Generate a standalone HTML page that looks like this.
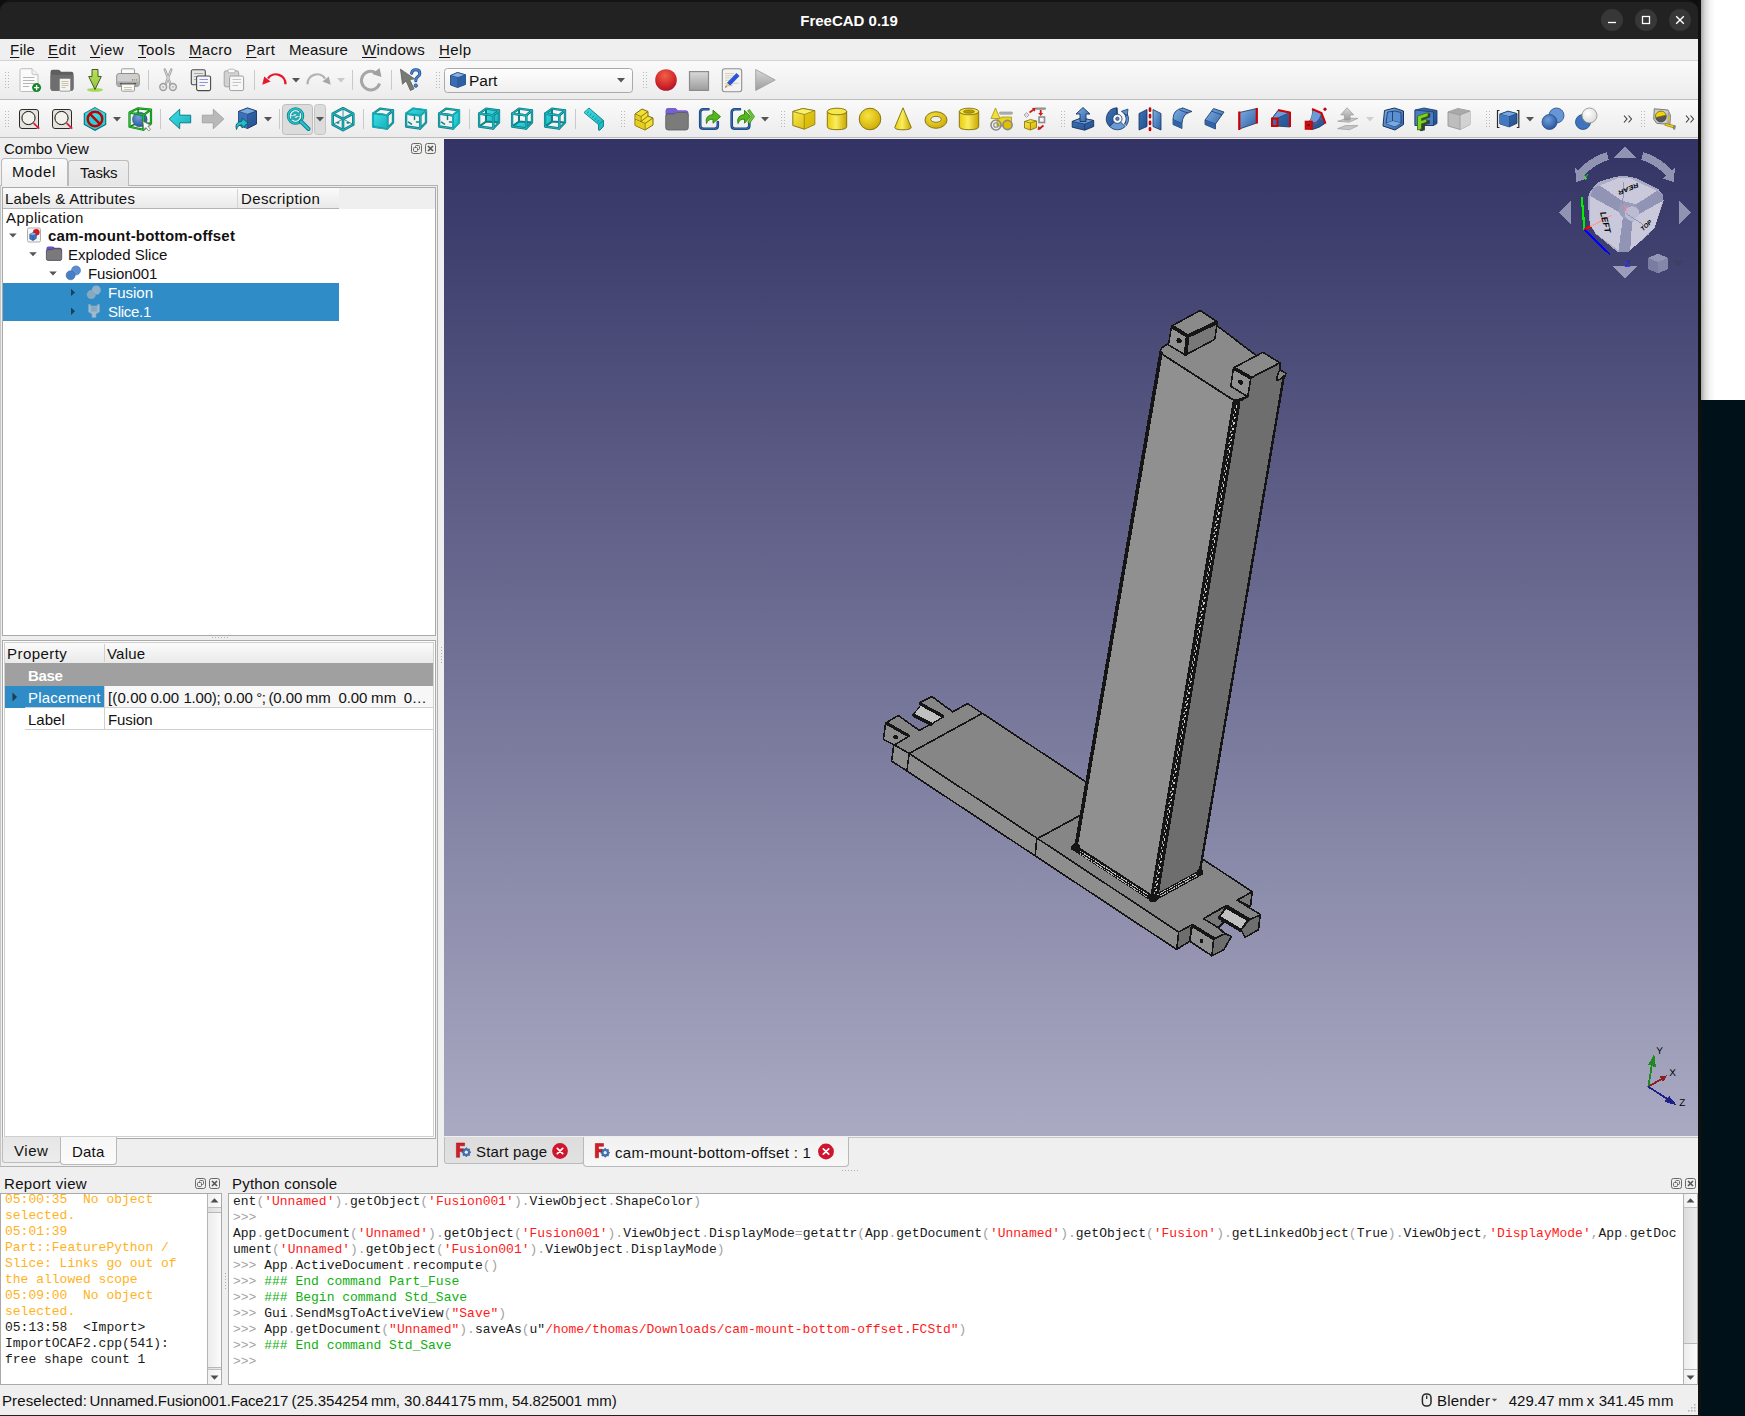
<!DOCTYPE html>
<html lang="en"><head><meta charset="utf-8"><title>FreeCAD 0.19</title>
<style>
*{box-sizing:border-box;margin:0;padding:0}
html,body{width:1745px;height:1416px;overflow:hidden;background:#fff}
body{position:relative;font-family:"Liberation Sans","DejaVu Sans",sans-serif;font-size:15px;color:#111;line-height:1}
.a{position:absolute}
.t{position:absolute;white-space:pre;line-height:18px;height:18px}
.mono{font-family:"Liberation Mono","DejaVu Sans Mono",monospace;font-size:13px;line-height:16px;white-space:pre;position:absolute}
u{text-decoration:underline;text-underline-offset:2px;text-decoration-thickness:1px}
#desk{left:1701px;top:400px;width:44px;height:1016px;background:#00111a}
#shadow{left:1701px;top:0;width:20px;height:400px;background:linear-gradient(90deg,#a8a8a8 0,#d8d8d8 4px,#f4f4f4 9px,#fff 14px)}
#win{left:0;top:0;width:1701px;height:1416px;background:#efefef;border-right:3px solid #11110f;border-bottom:1px solid #222;overflow:hidden}
#title{left:0;top:0;width:1698px;height:39px;background:#222222;border-top:2px solid #141414;border-radius:10px 10px 0 0}
#title .cap{left:0;width:1698px;top:10px;text-align:center;color:#fff;font-weight:bold;font-size:15px;line-height:18px;letter-spacing:0}
.wb{width:22px;height:22px;border-radius:11px;background:#373737;top:7px}
#menubar{left:0;top:39px;width:1698px;height:22px;background:#efefef;border-bottom:1px solid #d4d4d4}
.tb{left:0;width:1698px;height:38px;background:linear-gradient(#fafafa,#ececec);border-bottom:1px solid #bdbdbd}
.hdr{background:linear-gradient(#fbfbfb,#e9e9e9)}
.sel{background:#308cc6;color:#fff}
.grip{width:5px;height:18px;background-image:radial-gradient(circle,#b5b5b5 0.7px,transparent 1px);background-size:3px 3px}
.sep{width:1px;height:20px;background:#c8c8c8}
.ic{position:absolute;width:24px;height:24px;overflow:visible}
.arr{position:absolute;width:0;height:0;border-left:3.5px solid transparent;border-right:3.5px solid transparent;border-top:4px solid #555}
.dockb{position:absolute;width:11px;height:11px;border:1px solid #6a6865;border-radius:2.5px}
</style></head><body>
<div id="shadow" class="a"></div><div id="desk" class="a"></div>
<div id="win" class="a">
<div class="a" style="left:0;top:0;width:1698px;height:14px;background:#0e0e0e"></div>
<!-- title bar -->
<div id="title" class="a"><div class="a cap">FreeCAD 0.19</div>
<div class="a wb" style="left:1601px"><svg class="a" style="left:0;top:0" width="22" height="22"><path d="M7 13.5h8" stroke="#fff" stroke-width="1.3" fill="none"/></svg></div>
<div class="a wb" style="left:1635px"><svg class="a" style="left:0;top:0" width="22" height="22"><rect x="7.5" y="7.5" width="7" height="7" stroke="#fff" stroke-width="1.3" fill="none"/></svg></div>
<div class="a wb" style="left:1669px"><svg class="a" style="left:0;top:0" width="22" height="22"><path d="M7.2 7.2l7.6 7.6M14.8 7.2l-7.6 7.6" stroke="#fff" stroke-width="1.4" fill="none"/></svg></div>
</div>
<!-- menu bar -->
<div id="menubar" class="a">
<span class="t" style="left:10px;top:2px;letter-spacing:0.2px"><u>F</u>ile</span>
<span class="t" style="left:48px;top:2px;letter-spacing:0.6px"><u>E</u>dit</span>
<span class="t" style="left:90px;top:2px;letter-spacing:0.45px"><u>V</u>iew</span>
<span class="t" style="left:138px;top:2px;letter-spacing:0.5px"><u>T</u>ools</span>
<span class="t" style="left:189px;top:2px;letter-spacing:0.3px"><u>M</u>acro</span>
<span class="t" style="left:246px;top:2px;letter-spacing:0.45px"><u>P</u>art</span>
<span class="t" style="left:289px;top:2px;letter-spacing:0.08px">Measure</span>
<span class="t" style="left:362px;top:2px;letter-spacing:0.3px"><u>W</u>indows</span>
<span class="t" style="left:439px;top:2px;letter-spacing:0.4px"><u>H</u>elp</span>
</div>
<div class="a tb" id="tb1" style="top:61px;height:39px"></div>
<div class="a tb" id="tb2" style="top:100px;height:38px"></div>
<!-- toolbar icons -->
<svg class="a" style="left:0;top:0" width="1698" height="140" viewBox="0 0 1698 140">
<defs>
<linearGradient id="gB" x1="0" y1="0" x2="1" y2="1"><stop offset="0" stop-color="#7fb0e6"/><stop offset="1" stop-color="#2c5fa5"/></linearGradient>
<linearGradient id="gBd" x1="0" y1="0" x2="1" y2="1"><stop offset="0" stop-color="#3f73b8"/><stop offset="1" stop-color="#234f8e"/></linearGradient>
<linearGradient id="gY" x1="0" y1="0" x2="1" y2="1"><stop offset="0" stop-color="#fbed55"/><stop offset="1" stop-color="#d4b200"/></linearGradient>
<linearGradient id="gYh" x1="0" y1="0" x2="1" y2="0"><stop offset="0" stop-color="#e6cc10"/><stop offset=".45" stop-color="#fbee5c"/><stop offset="1" stop-color="#c8a600"/></linearGradient>
<linearGradient id="gC" x1="0" y1="0" x2="1" y2="1"><stop offset="0" stop-color="#3fe0e8"/><stop offset="1" stop-color="#17b0ba"/></linearGradient>
<linearGradient id="gG" x1="0" y1="0" x2="0" y2="1"><stop offset="0" stop-color="#d9d9d9"/><stop offset="1" stop-color="#9c9c9c"/></linearGradient>
<linearGradient id="gGr" x1="0" y1="0" x2="0" y2="1"><stop offset="0" stop-color="#b9e35a"/><stop offset="1" stop-color="#8dc63f"/></linearGradient>
<radialGradient id="gR" cx=".45" cy=".3" r=".75"><stop offset="0" stop-color="#f0604a"/><stop offset=".6" stop-color="#d42a2a"/><stop offset="1" stop-color="#a4102c"/></radialGradient>
<radialGradient id="gBs" cx=".4" cy=".35" r=".7"><stop offset="0" stop-color="#6f9fdb"/><stop offset="1" stop-color="#24549a"/></radialGradient>
<radialGradient id="gYs" cx=".4" cy=".35" r=".75"><stop offset="0" stop-color="#f8e540"/><stop offset="1" stop-color="#c9a400"/></radialGradient>
<radialGradient id="gW" cx=".4" cy=".35" r=".75"><stop offset="0" stop-color="#ffffff"/><stop offset="1" stop-color="#d6d6d2"/></radialGradient>
<linearGradient id="gCombo" x1="0" y1="0" x2="0" y2="1"><stop offset="0" stop-color="#fefefe"/><stop offset="1" stop-color="#efefef"/></linearGradient></defs>
<rect x="5" y="72" width="1" height="1" fill="#b9b9b9"/><rect x="8" y="72" width="1" height="1" fill="#b9b9b9"/><rect x="5" y="75" width="1" height="1" fill="#b9b9b9"/><rect x="8" y="75" width="1" height="1" fill="#b9b9b9"/><rect x="5" y="78" width="1" height="1" fill="#b9b9b9"/><rect x="8" y="78" width="1" height="1" fill="#b9b9b9"/><rect x="5" y="81" width="1" height="1" fill="#b9b9b9"/><rect x="8" y="81" width="1" height="1" fill="#b9b9b9"/><rect x="5" y="84" width="1" height="1" fill="#b9b9b9"/><rect x="8" y="84" width="1" height="1" fill="#b9b9b9"/><rect x="5" y="87" width="1" height="1" fill="#b9b9b9"/><rect x="8" y="87" width="1" height="1" fill="#b9b9b9"/>
<g transform="translate(18,68)"><path d="M3.5 0.7h10.5l6 6v15.3q0 1.5-1.5 1.5h-15q-1.5 0-1.5-1.5v-19.8q0-1.5 1.5-1.5z" fill="#fbfbfb" stroke="#bdbdbd"/><path d="M14 0.7v4.5q0 1.5 1.5 1.5h4.5" fill="#f0f0f0" stroke="#c6c6c6"/><path d="M5 9.5h11.5M5 12.5h11.5M5 15.5h11.5M5 18.5h6" stroke="#b4b4b4" stroke-width="1"/><circle cx="18.6" cy="19.6" r="4.5" fill="#14862a"/><path d="M16 19.6h5.2M18.6 17v5.2" stroke="#fff" stroke-width="1.3"/></g>
<g transform="translate(50,68)"><path d="M0.5 4q0-2.3 2.3-2.3h5.2q1.5 0 2.2 1l0.8 1.1h10.2q2.3 0 2.3 2.3v14.4q0 2.3-2.3 2.3h-18.4q-2.3 0-2.3-2.3z" fill="#5e5e5e"/><path d="M0.5 8.3q0-1.6 1.8-1.6h19.4q1.8 0 1.8 1.6v12.2q0 2.3-2.3 2.3h-18.4q-2.3 0-2.3-2.3z" fill="#6e6e6e"/><rect x="9.5" y="10.5" width="11" height="12.700" rx="1.300" fill="#f4f4f2" stroke="#8a8a8a" stroke-width=".8"/><path d="M11.500 13.500h7M11.500 15.500h7M11.500 17.500h7M11.500 19.500h4" stroke="#c9c1a8" stroke-width="1"/></g>
<g transform="translate(83,68)"><ellipse cx="12" cy="21.8" rx="8" ry="1.9" fill="#a6d85a"/><path d="M9 1.5h6v7h3.3l-6.3 13l-6.3-13h3.3z" fill="url(#gGr)" stroke="#3e4a1c" stroke-width=".9" stroke-linejoin="round"/></g>
<g transform="translate(116,68)"><rect x="5.5" y="0.8" width="13" height="8" rx="1" fill="#fafaf8" stroke="#9a9a9a"/><rect x="0.7" y="5.5" width="22.6" height="13" rx="2.5" fill="#cfcfcf" stroke="#8f8f8f"/><path d="M1.2 13.5h21.6v2.5q0 2-2 2h-17.6q-2 0-2-2z" fill="#a9a9a9"/><rect x="4" y="15" width="16" height="1.6" fill="#555"/><rect x="5.5" y="16.2" width="13" height="7" rx="1" fill="#fafaf8" stroke="#9a9a9a"/><path d="M8 19.500h8M8 21.500h8" stroke="#cfc8b0" stroke-width="1"/><rect x="16" y="11.3" width="1.2" height="1.2" fill="#e04040"/><rect x="18" y="11.3" width="1.2" height="1.2" fill="#e08030"/><rect x="20" y="11.3" width="1.2" height="1.2" fill="#40b040"/></g>
<rect x="148" y="70" width="1" height="20" fill="#c9c9c9"/>
<g transform="translate(156,68)"><path d="M8.800 1.500l5.800 15M15.300 1.500l-5.800 15" stroke="#9e9e9e" stroke-width="2.400" stroke-linecap="round"/><path d="M8.800 1.500l5.800 15M15.300 1.500l-5.800 15" stroke="#dedede" stroke-width=".9"/><circle cx="7.200" cy="19" r="3.400" fill="#e6e6e6" stroke="#a0a0a0" stroke-width="1.500"/><circle cx="16.900" cy="19" r="3.400" fill="#e6e6e6" stroke="#a0a0a0" stroke-width="1.500"/><circle cx="7.200" cy="19" r="1" fill="#bbb"/><circle cx="16.900" cy="19" r="1" fill="#bbb"/></g>
<g transform="translate(189,68)"><rect x="2.3" y="1.8" width="14" height="15" rx="1.6" fill="#e6e6e6" stroke="#4a4a4a" stroke-width="1.1"/><path d="M5 5.500h9M5 8.500h3M5 11.500h2.500" stroke="#a8a8a8"/><rect x="7.6" y="8" width="14" height="14.6" rx="1.6" fill="#f6f6f2" stroke="#4a4a4a" stroke-width="1.1"/><path d="M10.500 11.500h8.500M10.500 14.500h8.500M10.500 17.500h5.500" stroke="#8f8ff0" stroke-width="1"/></g>
<g transform="translate(222,68)"><rect x="2.2" y="2.8" width="14.5" height="16" rx="2" fill="#d2d2d2" stroke="#a4a4a4"/><rect x="6" y="1.2" width="7" height="3.6" rx="1.4" fill="#fafafa" stroke="#a8a8a8" stroke-width=".8"/><rect x="7.6" y="8" width="14" height="14.6" rx="1.6" fill="#f7f7f7" stroke="#a0a0a0"/><path d="M10.500 11.500h8.500M10.500 14.500h8.500M10.500 17.500h5.500" stroke="#c4c4c4" stroke-width="1"/></g>
<rect x="254" y="70" width="1" height="20" fill="#c9c9c9"/>
<g transform="translate(262,68)"><path d="M23.500 16.300A9.600 9.600 0 0 0 6 10.500" fill="none" stroke="#e8182c" stroke-width="2.300"/><path d="M0.300 16.700l1.900-8.200l6.400 5z" fill="#e8182c"/></g>
<path d="M292 78h8l-4 4.5z" fill="#555"/>
<g transform="translate(307,68)"><path d="M0.500 16.300A9.600 9.600 0 0 1 18 10.500" fill="none" stroke="#b2b2b2" stroke-width="2.300"/><path d="M23.700 16.700l-1.900-8.200l-6.400 5z" fill="#a6a6a6"/></g>
<path d="M337 78h8l-4 4.5z" fill="#c9c9c9"/>
<rect x="352" y="70" width="1" height="20" fill="#c9c9c9"/>
<g transform="translate(359,68)"><path d="M20.6 15.5a9.3 9.3 0 1 1-3.6-10.6" fill="none" stroke="#a6a6a6" stroke-width="3"/><path d="M13.2 5.9l9.3 3.1l-2-9z" fill="#a0a0a0"/></g>
<rect x="391" y="70" width="1" height="20" fill="#c9c9c9"/>
<g transform="translate(399,68)"><path d="M1.5 1.2l2 15l3.6-3.3l4.3 9.6l3.6-1.7l-4.4-9.3l5-0.6z" fill="#787a74" stroke="#5c5e58" stroke-width=".8" stroke-linejoin="round"/><path d="M12.6 5.2q0.5-3.4 4.2-3.4q4 0 4 3.6q0 2.2-2.3 3.7q-1.7 1.2-1.7 3.7" fill="none" stroke="#1d4f91" stroke-width="3" stroke-linecap="round"/><path d="M12.6 5.2q0.5-3.4 4.2-3.4q4 0 4 3.6q0 2.2-2.3 3.7q-1.7 1.2-1.7 3.7" fill="none" stroke="#4d86cf" stroke-width="1.5" stroke-linecap="round"/><circle cx="16.8" cy="17.6" r="1.7" fill="#4d86cf" stroke="#1d4f91" stroke-width=".9"/></g>
<rect x="436" y="72" width="1" height="1" fill="#b9b9b9"/><rect x="439" y="72" width="1" height="1" fill="#b9b9b9"/><rect x="436" y="75" width="1" height="1" fill="#b9b9b9"/><rect x="439" y="75" width="1" height="1" fill="#b9b9b9"/><rect x="436" y="78" width="1" height="1" fill="#b9b9b9"/><rect x="439" y="78" width="1" height="1" fill="#b9b9b9"/><rect x="436" y="81" width="1" height="1" fill="#b9b9b9"/><rect x="439" y="81" width="1" height="1" fill="#b9b9b9"/><rect x="436" y="84" width="1" height="1" fill="#b9b9b9"/><rect x="439" y="84" width="1" height="1" fill="#b9b9b9"/><rect x="436" y="87" width="1" height="1" fill="#b9b9b9"/><rect x="439" y="87" width="1" height="1" fill="#b9b9b9"/>
<rect x="444.5" y="68.5" width="188" height="24" rx="3" fill="url(#gCombo)" stroke="#a9a9a9"/>
<g transform="translate(450,72)"><path d="M0.5 3.5l7-3l8 2.3v9.7l-8 3l-7-2.5z" fill="#3a6db3" stroke="#1c3f72" stroke-width=".8"/><path d="M0.5 3.5l7.5 2l7.500-2.7l-8-2.300z" fill="#86b2e8" stroke="#1c3f72" stroke-width=".6"/><path d="M8 5.500v10" stroke="#1c3f72" stroke-width=".6"/><path d="M8 5.500l7.500-2.700v9.700l-7.500 3z" fill="#2d5fa3"/></g>
<path d="M617 78h8l-4 4.5z" fill="#555"/>
<rect x="643" y="72" width="1" height="1" fill="#b9b9b9"/><rect x="646" y="72" width="1" height="1" fill="#b9b9b9"/><rect x="643" y="75" width="1" height="1" fill="#b9b9b9"/><rect x="646" y="75" width="1" height="1" fill="#b9b9b9"/><rect x="643" y="78" width="1" height="1" fill="#b9b9b9"/><rect x="646" y="78" width="1" height="1" fill="#b9b9b9"/><rect x="643" y="81" width="1" height="1" fill="#b9b9b9"/><rect x="646" y="81" width="1" height="1" fill="#b9b9b9"/><rect x="643" y="84" width="1" height="1" fill="#b9b9b9"/><rect x="646" y="84" width="1" height="1" fill="#b9b9b9"/><rect x="643" y="87" width="1" height="1" fill="#b9b9b9"/><rect x="646" y="87" width="1" height="1" fill="#b9b9b9"/>
<g transform="translate(654,68)"><circle cx="12" cy="12" r="10.8" fill="url(#gR)"/></g>
<g transform="translate(687,68)"><rect x="2.500" y="3.600" width="19" height="18.800" fill="url(#gG)" stroke="#8c8c8c" stroke-width="1.200"/></g>
<g transform="translate(720,68)"><rect x="2.3" y="0.700" width="19.400" height="23" rx="2.500" fill="#f3f3f3" stroke="#8f8f8f" stroke-width="1.100"/><path d="M5 5.500h9M5 7.800h9M5 10h6M5 12.300h5M5 15.300h14M5 17.600h8" stroke="#cfc5a6" stroke-width=".8"/><path d="M16.5 5l3 3l-9.500 9.800l-3-3z" fill="#2855d8"/><path d="M7 14.800l3 3l-4.800 1.900z" fill="#f4c084"/><path d="M5.200 19.700l0.600-1.600l1 1z" fill="#444"/></g>
<g transform="translate(753,68)"><path d="M2.700 1.500v21l19.500-10.500z" fill="url(#gG)" stroke="#a2a2a2" stroke-width=".9"/></g>
<rect x="5" y="111" width="1" height="1" fill="#b9b9b9"/><rect x="8" y="111" width="1" height="1" fill="#b9b9b9"/><rect x="5" y="114" width="1" height="1" fill="#b9b9b9"/><rect x="8" y="114" width="1" height="1" fill="#b9b9b9"/><rect x="5" y="117" width="1" height="1" fill="#b9b9b9"/><rect x="8" y="117" width="1" height="1" fill="#b9b9b9"/><rect x="5" y="120" width="1" height="1" fill="#b9b9b9"/><rect x="8" y="120" width="1" height="1" fill="#b9b9b9"/><rect x="5" y="123" width="1" height="1" fill="#b9b9b9"/><rect x="8" y="123" width="1" height="1" fill="#b9b9b9"/><rect x="5" y="126" width="1" height="1" fill="#b9b9b9"/><rect x="8" y="126" width="1" height="1" fill="#b9b9b9"/>
<g transform="translate(17,107)"><rect x="2.500" y="2.500" width="19" height="19" rx="2.500" fill="#e6e3dc" stroke="#2a2a2a" stroke-width="1"/><circle cx="11.500" cy="11" r="6.600" fill="#f3f1ec" stroke="#111" stroke-width="1"/><path d="M16.600 16.100l5.600 5.600" stroke="#e0163c" stroke-width="1.700"/></g>
<g transform="translate(50,107)"><rect x="2.500" y="2.500" width="19" height="19" rx="2.500" fill="#e6e3dc" stroke="#2a2a2a" stroke-width="1"/><circle cx="11.500" cy="11" r="6.600" fill="#f3f1ec" stroke="#111" stroke-width="1"/><path d="M16.600 16.100l5.600 5.600" stroke="#e0163c" stroke-width="1.700"/></g>
<g transform="translate(83,107)"><path d="M12 0.700l10.700 5.800v11l-10.700 5.800l-10.700-5.800v-11z" fill="#27cfda" stroke="#0a6f76" stroke-width="1.100"/><path d="M12 0.700l10.700 5.800l-10.700 5.500l-10.700-5.500z" fill="#43e0e8" opacity=".6"/><circle cx="12" cy="12" r="7.300" fill="none" stroke="#c40000" stroke-width="2.400"/><path d="M6.900 6.900l10.200 10.200" stroke="#c40000" stroke-width="2.400"/></g>
<path d="M113 117h8l-4 4.5z" fill="#555"/>
<g transform="translate(128,107)"><path d="M10.100 1.300v14.500l-8.600 4M10.100 15.800l12.900 0.600" fill="none" stroke="#0d8a16" stroke-width="1.600"/><circle cx="11.800" cy="12.500" r="7.300" fill="url(#gBs)" stroke="#1d447e" stroke-width=".5"/><path d="M1.500 5.600l8.600-4.300l12.900 1.300v13.800l-7.700 6.400l-13.800-3zM1.500 5.600l14.200 2.200l7.300-5.200M15.700 7.800l-0.400 15" fill="none" stroke="#0b7d13" stroke-width="2.200" stroke-linejoin="round"/><path d="M1.500 5.600l8.600-4.300l12.900 1.300v13.800l-7.700 6.400l-13.800-3zM1.500 5.600l14.200 2.200l7.300-5.200M15.700 7.800l-0.400 15" fill="none" stroke="#2fd238" stroke-width=".8" stroke-linejoin="round"/><path d="M14.800 14.300l1.200 8.200l2.100-1.900l2.600 3.300l1.900-1.500l-2.700-3.200l2.800-1z" fill="#fff" stroke="#7a7a7a" stroke-width=".8" stroke-linejoin="round"/></g>
<rect x="160" y="109" width="1" height="20" fill="#c9c9c9"/>
<g transform="translate(168,107)"><path d="M1.200 12l10.500-9.800v6h11v7.600h-11v6z" fill="url(#gC)" stroke="#0e7c84" stroke-width="1" stroke-linejoin="round"/></g>
<g transform="translate(201,107)"><path d="M22.800 12l-10.500-9.800v6h-11v7.600h11v6z" fill="#b9b9b9" stroke="#a4a4a4" stroke-width="1" stroke-linejoin="round"/></g>
<g transform="translate(234,107)"><path d="M4.500 4.500l9-3.500l9 3v13l-9 4.500l-9-3.500z" fill="url(#gBd)" stroke="#16335e" stroke-width=".9" stroke-linejoin="round"/><path d="M4.500 4.500l9 2.800l9-3.300l-9-3z" fill="#7aaae2" stroke="#16335e" stroke-width=".7"/><path d="M13.500 7.300v14.200" stroke="#16335e" stroke-width=".7"/><path d="M4.500 4.500l9 2.800v14.200l-9-3.500z" fill="#3d70b8"/><path d="M2.500 22.500q-2.500-7 5.500-8.500v-3l6 5l-6 5v-3q-4-0.500-5.500 4.500z" fill="#1fc0ca" stroke="#0a5a60" stroke-width=".9" stroke-linejoin="round"/></g>
<path d="M264 117h8l-4 4.5z" fill="#555"/>
<rect x="279" y="109" width="1" height="20" fill="#c9c9c9"/>
<rect x="282.500" y="104.500" width="30" height="30" rx="3" fill="#dcdcdc" stroke="#bdbdbd"/><rect x="314.500" y="104.500" width="11" height="30" rx="3" fill="#dcdcdc" stroke="#c4c4c4"/>
<g transform="translate(286,107)"><circle cx="9.500" cy="9" r="7.300" fill="#dff4f5" stroke="#0e7c84" stroke-width="2.800"/><circle cx="9.500" cy="9" r="7.300" fill="none" stroke="#22c6d0" stroke-width="1.400"/><path d="M15 14.500l7.500 7.500" stroke="#0e7c84" stroke-width="4" stroke-linecap="round"/><path d="M15 14.500l7.500 7.500" stroke="#22c6d0" stroke-width="2.200" stroke-linecap="round"/><path d="M5.500 8a4 4 0 0 1 7-2l1-1.200v4h-4l1.300-1.300a2.400 2.400 0 0 0-3.800 0.500zM13.500 10a4 4 0 0 1-7 2l-1 1.200v-4h4l-1.300 1.300a2.400 2.400 0 0 0 3.800-0.500z" fill="#18b4be" stroke="#0e7c84" stroke-width=".5"/></g>
<path d="M316 117h8l-4 4.5z" fill="#555"/>
<g transform="translate(331,107)"><path d="M12 1.200l10.300 5.400v11l-10.300 5.600l-10.300-5.600v-11z" fill="none" stroke="#0e7c84" stroke-width="2.600" stroke-linejoin="round"/><path d="M1.700 6.600l10.300 5.400l10.300-5.400M12 12v11" fill="none" stroke="#0e7c84" stroke-width="2.600"/><path d="M12 1.200l10.300 5.400v11l-10.300 5.600l-10.300-5.600v-11z" fill="none" stroke="#25cdd7" stroke-width=".8" stroke-linejoin="round"/><path d="M1.700 6.600l10.300 5.400l10.300-5.400M12 12v11" fill="none" stroke="#25cdd7" stroke-width=".8"/><path d="M12 2v9M2.500 17.200l9-5M21.500 17.200l-9-5" stroke="#0e7c84" stroke-width=".8"/><ellipse cx="7" cy="15.800" rx="1.600" ry=".9" fill="#0e7c84"/><ellipse cx="17" cy="15.800" rx="1.600" ry=".9" fill="#0e7c84"/></g>
<rect x="363" y="109" width="1" height="20" fill="#c9c9c9"/>
<g transform="translate(371,107)"><path d="M10.5 12.6v-3.200M12.5 15.1h3.200M7.5 17.1l-3-2" stroke="#0f8289" stroke-width="1.500" fill="none" stroke-linecap="round"/><polygon points="2.1,6.6 16.2,8.3 16.2,21.5 2.1,19.5" fill="none" stroke="#0e7c84" stroke-width="2.300" stroke-linejoin="round"/><polygon points="2.1,6.6 9,1.7 22,3.4 16.2,8.3" fill="none" stroke="#0e7c84" stroke-width="2.300" stroke-linejoin="round"/><polygon points="16.2,8.3 22,3.4 22,15.5 16.2,21.5" fill="none" stroke="#0e7c84" stroke-width="2.300" stroke-linejoin="round"/><polygon points="2.1,6.6 16.2,8.3 16.2,21.5 2.1,19.5" fill="none" stroke="#1fb4bd" stroke-width="1" stroke-linejoin="round"/><polygon points="2.1,6.6 9,1.7 22,3.4 16.2,8.3" fill="none" stroke="#1fb4bd" stroke-width="1" stroke-linejoin="round"/><polygon points="16.2,8.3 22,3.4 22,15.5 16.2,21.5" fill="none" stroke="#1fb4bd" stroke-width="1" stroke-linejoin="round"/><polygon points="2.1,6.6 16.2,8.3 16.2,21.5 2.1,19.5" fill="url(#gC)" stroke="#1fc3cc" stroke-width="2.100" stroke-linejoin="round"/><polygon points="2.1,6.6 16.2,8.3 16.2,21.5 2.1,19.5" fill="none" stroke="#0e7c84" stroke-width=".6" stroke-linejoin="round" transform=""/></g>
<g transform="translate(404,107)"><path d="M10.5 12.6v-3.200M12.5 15.1h3.200M7.5 17.1l-3-2" stroke="#0f8289" stroke-width="1.500" fill="none" stroke-linecap="round"/><polygon points="2.1,6.6 16.2,8.3 16.2,21.5 2.1,19.5" fill="none" stroke="#0e7c84" stroke-width="2.300" stroke-linejoin="round"/><polygon points="2.1,6.6 9,1.7 22,3.4 16.2,8.3" fill="none" stroke="#0e7c84" stroke-width="2.300" stroke-linejoin="round"/><polygon points="16.2,8.3 22,3.4 22,15.5 16.2,21.5" fill="none" stroke="#0e7c84" stroke-width="2.300" stroke-linejoin="round"/><polygon points="2.1,6.6 16.2,8.3 16.2,21.5 2.1,19.5" fill="none" stroke="#1fb4bd" stroke-width="1" stroke-linejoin="round"/><polygon points="2.1,6.6 9,1.7 22,3.4 16.2,8.3" fill="none" stroke="#1fb4bd" stroke-width="1" stroke-linejoin="round"/><polygon points="16.2,8.3 22,3.4 22,15.5 16.2,21.5" fill="none" stroke="#1fb4bd" stroke-width="1" stroke-linejoin="round"/><polygon points="2.1,6.6 9,1.7 22,3.4 16.2,8.3" fill="url(#gC)" stroke="#1fc3cc" stroke-width="2.100" stroke-linejoin="round"/><polygon points="2.1,6.6 9,1.7 22,3.4 16.2,8.3" fill="none" stroke="#0e7c84" stroke-width=".6" stroke-linejoin="round" transform=""/></g>
<g transform="translate(437,107)"><path d="M10.5 12.6v-3.200M12.5 15.1h3.200M7.5 17.1l-3-2" stroke="#0f8289" stroke-width="1.500" fill="none" stroke-linecap="round"/><polygon points="2.1,6.6 16.2,8.3 16.2,21.5 2.1,19.5" fill="none" stroke="#0e7c84" stroke-width="2.300" stroke-linejoin="round"/><polygon points="2.1,6.6 9,1.7 22,3.4 16.2,8.3" fill="none" stroke="#0e7c84" stroke-width="2.300" stroke-linejoin="round"/><polygon points="16.2,8.3 22,3.4 22,15.5 16.2,21.5" fill="none" stroke="#0e7c84" stroke-width="2.300" stroke-linejoin="round"/><polygon points="2.1,6.6 16.2,8.3 16.2,21.5 2.1,19.5" fill="none" stroke="#1fb4bd" stroke-width="1" stroke-linejoin="round"/><polygon points="2.1,6.6 9,1.7 22,3.4 16.2,8.3" fill="none" stroke="#1fb4bd" stroke-width="1" stroke-linejoin="round"/><polygon points="16.2,8.3 22,3.4 22,15.5 16.2,21.5" fill="none" stroke="#1fb4bd" stroke-width="1" stroke-linejoin="round"/><polygon points="16.2,8.3 22,3.4 22,15.5 16.2,21.5" fill="url(#gC)" stroke="#1fc3cc" stroke-width="2.100" stroke-linejoin="round"/><polygon points="16.2,8.3 22,3.4 22,15.5 16.2,21.5" fill="none" stroke="#0e7c84" stroke-width=".6" stroke-linejoin="round" transform=""/></g>
<g transform="translate(477,107)"><polygon points="9,1.7 22,3.4 22,15.5 9,14.6" fill="url(#gC)" stroke="#2fd3dc" stroke-width="1.500" stroke-linejoin="round"/><path d="M9 14.6L9 1.7M9 14.6L2.1 19.5M9 14.6L22 15.5" stroke="#0f8289" stroke-width="2" fill="none"/><polygon points="2.1,6.6 16.2,8.3 16.2,21.5 2.1,19.5" fill="none" stroke="#0e7c84" stroke-width="2.300" stroke-linejoin="round"/><polygon points="2.1,6.6 9,1.7 22,3.4 16.2,8.3" fill="none" stroke="#0e7c84" stroke-width="2.300" stroke-linejoin="round"/><polygon points="16.2,8.3 22,3.4 22,15.5 16.2,21.5" fill="none" stroke="#0e7c84" stroke-width="2.300" stroke-linejoin="round"/><polygon points="2.1,6.6 16.2,8.3 16.2,21.5 2.1,19.5" fill="none" stroke="#1fb4bd" stroke-width="1" stroke-linejoin="round"/><polygon points="2.1,6.6 9,1.7 22,3.4 16.2,8.3" fill="none" stroke="#1fb4bd" stroke-width="1" stroke-linejoin="round"/><polygon points="16.2,8.3 22,3.4 22,15.5 16.2,21.5" fill="none" stroke="#1fb4bd" stroke-width="1" stroke-linejoin="round"/></g>
<g transform="translate(510,107)"><polygon points="2.1,19.5 16.2,21.5 22,15.5 9,14.6" fill="url(#gC)" stroke="#2fd3dc" stroke-width="1.500" stroke-linejoin="round"/><path d="M9 14.6L9 1.7M9 14.6L2.1 19.5M9 14.6L22 15.5" stroke="#0f8289" stroke-width="2" fill="none"/><polygon points="2.1,6.6 16.2,8.3 16.2,21.5 2.1,19.5" fill="none" stroke="#0e7c84" stroke-width="2.300" stroke-linejoin="round"/><polygon points="2.1,6.6 9,1.7 22,3.4 16.2,8.3" fill="none" stroke="#0e7c84" stroke-width="2.300" stroke-linejoin="round"/><polygon points="16.2,8.3 22,3.4 22,15.5 16.2,21.5" fill="none" stroke="#0e7c84" stroke-width="2.300" stroke-linejoin="round"/><polygon points="2.1,6.6 16.2,8.3 16.2,21.5 2.1,19.5" fill="none" stroke="#1fb4bd" stroke-width="1" stroke-linejoin="round"/><polygon points="2.1,6.6 9,1.7 22,3.4 16.2,8.3" fill="none" stroke="#1fb4bd" stroke-width="1" stroke-linejoin="round"/><polygon points="16.2,8.3 22,3.4 22,15.5 16.2,21.5" fill="none" stroke="#1fb4bd" stroke-width="1" stroke-linejoin="round"/></g>
<g transform="translate(543,107)"><polygon points="2.1,6.6 9,1.7 9,14.6 2.1,19.5" fill="url(#gC)" stroke="#2fd3dc" stroke-width="1.500" stroke-linejoin="round"/><path d="M9 14.6L9 1.7M9 14.6L2.1 19.5M9 14.6L22 15.5" stroke="#0f8289" stroke-width="2" fill="none"/><polygon points="2.1,6.6 16.2,8.3 16.2,21.5 2.1,19.5" fill="none" stroke="#0e7c84" stroke-width="2.300" stroke-linejoin="round"/><polygon points="2.1,6.6 9,1.7 22,3.4 16.2,8.3" fill="none" stroke="#0e7c84" stroke-width="2.300" stroke-linejoin="round"/><polygon points="16.2,8.3 22,3.4 22,15.5 16.2,21.5" fill="none" stroke="#0e7c84" stroke-width="2.300" stroke-linejoin="round"/><polygon points="2.1,6.6 16.2,8.3 16.2,21.5 2.1,19.5" fill="none" stroke="#1fb4bd" stroke-width="1" stroke-linejoin="round"/><polygon points="2.1,6.6 9,1.7 22,3.4 16.2,8.3" fill="none" stroke="#1fb4bd" stroke-width="1" stroke-linejoin="round"/><polygon points="16.2,8.3 22,3.4 22,15.5 16.2,21.5" fill="none" stroke="#1fb4bd" stroke-width="1" stroke-linejoin="round"/></g>
<rect x="469" y="109" width="1" height="20" fill="#c9c9c9"/>
<rect x="575" y="109" width="1" height="20" fill="#c9c9c9"/>
<g transform="translate(582,107)"><path d="M2 5.500l5-4.500l14.500 12.500v6l-4 4l-1-0.500v-5.500z" fill="url(#gC)" stroke="#0e7c84" stroke-width=".9" stroke-linejoin="round"/><path d="M16.500 17.500l5-4" stroke="#0e7c84" stroke-width=".8"/><path d="M7 4.500l-1.700 1.500M9.500 6.700l-1.700 1.500M12 8.900l-1.700 1.500M14.500 11.100l-1.700 1.500M17 13.300l-1.700 1.500" stroke="#0e7c84" stroke-width=".9"/></g>
<rect x="621" y="111" width="1" height="1" fill="#b9b9b9"/><rect x="624" y="111" width="1" height="1" fill="#b9b9b9"/><rect x="621" y="114" width="1" height="1" fill="#b9b9b9"/><rect x="624" y="114" width="1" height="1" fill="#b9b9b9"/><rect x="621" y="117" width="1" height="1" fill="#b9b9b9"/><rect x="624" y="117" width="1" height="1" fill="#b9b9b9"/><rect x="621" y="120" width="1" height="1" fill="#b9b9b9"/><rect x="624" y="120" width="1" height="1" fill="#b9b9b9"/><rect x="621" y="123" width="1" height="1" fill="#b9b9b9"/><rect x="624" y="123" width="1" height="1" fill="#b9b9b9"/><rect x="621" y="126" width="1" height="1" fill="#b9b9b9"/><rect x="624" y="126" width="1" height="1" fill="#b9b9b9"/>
<g transform="translate(632,107)"><path d="M3 7l7-5l6 2.500v4.500l5 2v7l-8 5l-10-4.500z" fill="#f2df35" stroke="#7d6c0a" stroke-width="1" stroke-linejoin="round"/><path d="M3 7l6 2.500l7-5M9 9.500v5l-6-2.500M9 14.500l7-5.500M8 14l5 2.500l8-5.500M13 16.500v6.500" fill="none" stroke="#7d6c0a" stroke-width=".9"/><path d="M3 7l6 2.500v5l-6-2.500zM3 13.500l10 3v6.500l-10-4.500z" fill="#d9be10" opacity=".55"/></g>
<g transform="translate(665,107)"><path d="M0.700 4q0-3 3-3h5.500q1.500 0 2.500 1.200l1 1.300h8q2.600 0 2.600 2.600v4h-22.600z" fill="#5a42b4"/><path d="M0.700 4q0-3 3-3h5.500q1.500 0 2.500 1.200l1 1.300h8q2.600 0 2.600 2.600v0.400h-22.600z" fill="#8068dc" opacity=".8"/><path d="M0.700 9.500q0-2.500 2.500-2.500h5q1.300 0 2.300-0.900l0.700-0.600h9.600q2.500 0 2.500 2.500v12.500q0 2.500-2.500 2.500h-17.600q-2.500 0-2.500-2.500z" fill="#7b7b7b" stroke="#5e5e5e" stroke-width=".8"/></g>
<g transform="translate(698,107)"><path d="M10.500 2.200h-5q-3.300 0-3.300 3.300v13q0 3.300 3.300 3.300h11q3.300 0 3.300-3.300v-3.500" fill="none" stroke="#17427c" stroke-width="2.600" stroke-linecap="round"/><path d="M10.500 2.200h-5q-3.300 0-3.300 3.300v13q0 3.300 3.300 3.300h11q3.300 0 3.300-3.300v-3.500" fill="none" stroke="#3b72b8" stroke-width="1" stroke-linecap="round"/><path d="M8.500 16.500q-2-8 6.500-9v-4.300l7.500 6.500l-7.500 6.500v-4q-5-0.300-6.500 4.300z" fill="#55b81a" stroke="#2c7a10" stroke-width=".9" stroke-linejoin="round"/></g>
<g transform="translate(731,107)"><g transform="translate(-1.500,0)"><path d="M10.500 2.200h-5q-3.300 0-3.300 3.300v13q0 3.300 3.300 3.300h11q3.300 0 3.300-3.300v-3.500" fill="none" stroke="#17427c" stroke-width="2.600" stroke-linecap="round"/><path d="M10.500 2.200h-5q-3.300 0-3.300 3.300v13q0 3.300 3.300 3.300h11q3.300 0 3.300-3.300v-3.500" fill="none" stroke="#3b72b8" stroke-width="1" stroke-linecap="round"/><path d="M8.500 16.500q-2-8 6.500-9v-4.300l6 6.500l-6 6.500v-4q-5-0.300-6.500 4.300z" fill="#55b81a" stroke="#2c7a10" stroke-width=".9" stroke-linejoin="round"/></g><path d="M18.500 2.500l5 7l-5 7l-1.800-1.200l4-5.800l-4-5.800z" fill="#6ccf2a" stroke="#2c7a10" stroke-width=".7"/></g>
<path d="M761 117h8l-4 4.5z" fill="#555"/>
<rect x="781" y="111" width="1" height="1" fill="#b9b9b9"/><rect x="784" y="111" width="1" height="1" fill="#b9b9b9"/><rect x="781" y="114" width="1" height="1" fill="#b9b9b9"/><rect x="784" y="114" width="1" height="1" fill="#b9b9b9"/><rect x="781" y="117" width="1" height="1" fill="#b9b9b9"/><rect x="784" y="117" width="1" height="1" fill="#b9b9b9"/><rect x="781" y="120" width="1" height="1" fill="#b9b9b9"/><rect x="784" y="120" width="1" height="1" fill="#b9b9b9"/><rect x="781" y="123" width="1" height="1" fill="#b9b9b9"/><rect x="784" y="123" width="1" height="1" fill="#b9b9b9"/><rect x="781" y="126" width="1" height="1" fill="#b9b9b9"/><rect x="784" y="126" width="1" height="1" fill="#b9b9b9"/>
<g transform="translate(792,107)"><path d="M0.800 4.500l10-3l12 2.200v13.800l-10.500 4.700l-11.500-3.700z" fill="url(#gY)" stroke="#7d6c0a" stroke-width=".9" stroke-linejoin="round"/><path d="M0.800 4.500l11.500 3l10.500-3.800l-12-2.200z" fill="#fbf06a" stroke="#7d6c0a" stroke-width=".7" stroke-linejoin="round"/><path d="M12.300 7.500v14.700" stroke="#7d6c0a" stroke-width=".8"/><path d="M12.300 7.500l10.500-3.800v13.800l-10.500 4.700z" fill="#d8b800" opacity=".5"/></g>
<g transform="translate(825,107)"><path d="M2.300 4.500v15q0 3.200 9.700 3.200t9.700-3.200v-15z" fill="url(#gYh)" stroke="#7d6c0a" stroke-width=".9"/><ellipse cx="12" cy="4.500" rx="9.700" ry="3.300" fill="#f7e84a" stroke="#7d6c0a" stroke-width=".9"/></g>
<g transform="translate(858,107)"><circle cx="12" cy="12" r="10.800" fill="url(#gYs)" stroke="#7d6c0a" stroke-width=".9"/></g>
<g transform="translate(891,107)"><path d="M12 0.800l8.200 19.500q0 2.500-8.200 2.500t-8.200-2.500z" fill="url(#gYh)" stroke="#7d6c0a" stroke-width=".9" stroke-linejoin="round"/></g>
<g transform="translate(924,107)"><ellipse cx="12" cy="13" rx="11" ry="8.300" fill="url(#gYs)" stroke="#7d6c0a" stroke-width=".9"/><ellipse cx="12" cy="12.300" rx="5.300" ry="3" fill="#efefef" stroke="#7d6c0a" stroke-width=".9"/></g>
<g transform="translate(957,107)"><path d="M2.300 4.500v15q0 3.200 9.700 3.200t9.700-3.200v-15z" fill="url(#gYh)" stroke="#7d6c0a" stroke-width=".9"/><ellipse cx="12" cy="4.500" rx="9.700" ry="3.300" fill="#f7e84a" stroke="#7d6c0a" stroke-width=".9"/><ellipse cx="12" cy="4.600" rx="5.500" ry="1.700" fill="#b89a00" stroke="#7d6c0a" stroke-width=".7"/></g>
<g transform="translate(990,107)"><path d="M5.500 1l4.500 10.500h-9z" fill="#f2df35" stroke="#9a8610" stroke-width=".7"/><rect x="9.500" y="5" width="13" height="2.200" rx="1" fill="#b5b5b5" stroke="#8a8a8a" stroke-width=".6"/><path d="M7 12.500l5-2.500h9.500v6l-5 3h-9.500z" fill="#ecd41c" stroke="#9a8610" stroke-width=".7"/><circle cx="6" cy="18" r="5" fill="none" stroke="#8a8a8a" stroke-width="1.600"/><circle cx="6" cy="18" r="2.300" fill="none" stroke="#8a8a8a" stroke-width="1.100"/><circle cx="17.500" cy="18" r="4.600" fill="#e0c000" stroke="#8a8a8a" stroke-width="1.700"/></g>
<g transform="translate(1023,107)"><path d="M1.500 14.500l6-2l6 1.500v6.500l-6 2.500l-6-2z" fill="url(#gY)" stroke="#7d6c0a" stroke-width=".8"/><path d="M1.500 14.500l6 1.500l6-2M7.500 16v7" fill="none" stroke="#7d6c0a" stroke-width=".7"/><rect x="12.500" y="0.500" width="10.500" height="2.200" rx="1" fill="#909090"/><path d="M17.700 3v4" stroke="#d01818" stroke-width="1.800"/><path d="M15.200 6h5l-2.500 3z" fill="#d01818"/><rect x="16" y="10" width="5.500" height="5.500" fill="#f4f4f4" stroke="#8c8c8c" stroke-width="1.600"/><path d="M3.500 5.500l2.500 2.500l-2.500 2.500l-2.500-2.500z" transform="rotate(0)" fill="#ddd" stroke="#9a9a9a" stroke-width=".8"/><path d="M6.500 5.500l5-3.500" stroke="#d01818" stroke-width="1.800"/><path d="M9 1l4-0.300l-1.300 4z" fill="#d01818"/><path d="M16 22l4.500-3.500" stroke="#d01818" stroke-width="1.800"/><path d="M14.500 23l1-4l3 3z" fill="#d01818"/></g>
<rect x="1061" y="111" width="1" height="1" fill="#b9b9b9"/><rect x="1064" y="111" width="1" height="1" fill="#b9b9b9"/><rect x="1061" y="114" width="1" height="1" fill="#b9b9b9"/><rect x="1064" y="114" width="1" height="1" fill="#b9b9b9"/><rect x="1061" y="117" width="1" height="1" fill="#b9b9b9"/><rect x="1064" y="117" width="1" height="1" fill="#b9b9b9"/><rect x="1061" y="120" width="1" height="1" fill="#b9b9b9"/><rect x="1064" y="120" width="1" height="1" fill="#b9b9b9"/><rect x="1061" y="123" width="1" height="1" fill="#b9b9b9"/><rect x="1064" y="123" width="1" height="1" fill="#b9b9b9"/><rect x="1061" y="126" width="1" height="1" fill="#b9b9b9"/><rect x="1064" y="126" width="1" height="1" fill="#b9b9b9"/>
<g transform="translate(1071,107)"><path d="M1.200 14.500l9-3.500l12.500 2.500v6l-9 3.700l-12.500-3z" fill="url(#gBd)" stroke="#16335e" stroke-width=".9" stroke-linejoin="round"/><path d="M1.200 14.500l12.500 2.500l9-3.500l-12.500-2.500z" fill="#6d9bd6" stroke="#16335e" stroke-width=".7"/><path d="M13.700 17v6" stroke="#16335e" stroke-width=".7"/><path d="M9 14.500v-7.500h-4l7-6.500l7 6.500h-4v7.500z" fill="url(#gB)" stroke="#16335e" stroke-width=".9" stroke-linejoin="round"/></g>
<g transform="translate(1105,107)"><path d="M12.400 11.800L12 0.800A11 11 0 0 0 4.600 19.600z" fill="url(#gBd)" stroke="#16335e" stroke-width=".8" stroke-linejoin="round"/><path d="M12.400 11.800L4.600 19.600A11 11 0 0 0 20.200 19.600z" fill="#6a9bd8" stroke="#16335e" stroke-width=".8" stroke-linejoin="round"/><path d="M12 0.800L12.400 11.800" stroke="#16335e" stroke-width=".8"/><circle cx="12.400" cy="11.800" r="4.600" fill="#f4f4f4" stroke="#16335e" stroke-width=".8"/><circle cx="12.400" cy="11.800" r="1.700" fill="#4d80c4" stroke="#16335e" stroke-width=".6"/><path d="M20.300 18A10 10 0 0 0 19.400 4.800" fill="none" stroke="#16335e" stroke-width="3.200"/><path d="M20.300 18A10 10 0 0 0 19.400 4.800" fill="none" stroke="#5d90d2" stroke-width="1.800"/><path d="M16.300 4.300l6.700-2.200l-0.800 6.600z" fill="#5d90d2" stroke="#16335e" stroke-width=".7" stroke-linejoin="round"/></g>
<g transform="translate(1138,107)"><path d="M1 6.500l8-4v17l-8 3.500z" fill="url(#gBd)" stroke="#16335e" stroke-width=".8"/><path d="M15 2.500l8 4v16.500l-8-3.500z" fill="url(#gB)" stroke="#16335e" stroke-width=".8"/><path d="M12 1.500v21.500" stroke="#c80000" stroke-width="2.600" stroke-dasharray="2.200 4.400" stroke-linecap="round"/></g>
<g transform="translate(1171,107)"><path d="M2 12q0-9.500 10-11l9 3.500q-9.500 1.500-10 12v5l-9-4z" fill="url(#gB)" stroke="#16335e" stroke-width=".8" stroke-linejoin="round"/><path d="M2 12.500l9 4M12 1l-1 0.300" stroke="#16335e" stroke-width=".7" fill="none"/><path d="M2 13l9 3.800v4.700l-9-4z" fill="#2f62a8"/><path d="M8.500 3l9 3.300" stroke="#16335e" stroke-width=".7"/></g>
<g transform="translate(1203,107)"><path d="M2 13l8.500-11.500l10.500 3.500l-8.500 12v5l-10.500-4.500z" fill="url(#gB)" stroke="#16335e" stroke-width=".8" stroke-linejoin="round"/><path d="M2 13l10.500 4M8.500 4.200l10.500 3.600" stroke="#16335e" stroke-width=".7" fill="none"/><path d="M2 13.500l10.500 4v4.500l-10.500-4.500z" fill="#2f62a8"/></g>
<g transform="translate(1237,107)"><path d="M2.300 5.500l17.500-4v14.500l-17.500 6z" fill="url(#gB)" stroke="#16335e" stroke-width=".8"/><path d="M2.300 4.500v18.500M19.800 1v15.500" stroke="#cc0000" stroke-width="2.200"/></g>
<g transform="translate(1270,107)"><path d="M2 11.500l6-8l12 2v14.500l-13.500-1z" fill="url(#gBd)" stroke="#16335e" stroke-width=".8"/><path d="M2 11.500l6-8l12 2l-13.500 6z" fill="#6d9bd6" stroke="#16335e" stroke-width=".6"/><path d="M8 3l12 2.500v14.500" fill="none" stroke="#d40000" stroke-width="2"/><rect x="2" y="11.500" width="5.500" height="7.500" fill="#3a6db3" stroke="#d40000" stroke-width="2"/></g>
<g transform="translate(1303,107)"><path d="M2.500 15l3.500 0q4-5 3.500-12.500l8.500 3.500q3 4.500 4.500 10q-6 5-13 6.500l-7-1.500z" fill="url(#gBd)" stroke="#16335e" stroke-width=".8" stroke-linejoin="round"/><path d="M6 15q4-5 3.500-12.500l8.500 3.500q-1.500 6.500-5.500 9z" fill="#6d9bd6"/><path d="M9 2l9.500 4l4 10.500" fill="none" stroke="#d40000" stroke-width="2"/><rect x="2.500" y="14.500" width="6.500" height="7.500" fill="#c01818" stroke="#d40000" stroke-width="1.600"/><rect x="4.200" y="17.200" width="2.800" height="2" fill="#7a0c0c"/><circle cx="22" cy="2.200" r="1.300" fill="#d40000" stroke="#8a0000" stroke-width=".6"/><path d="M11.500 17l3-1.500M17 13l2-1.500" stroke="#d43a3a" stroke-width="1"/></g>
<g transform="translate(1336,107)"><path d="M1.700 21.700l7.800-3.100h12.400l-8.300 4.100z" fill="#c6c6c6" stroke="#a2a2a2" stroke-width=".8" stroke-linejoin="round"/><path d="M1.700 14.300l9.300-3h10.900l-8.800 3.900z" fill="#c6c6c6" stroke="#a2a2a2" stroke-width=".8" stroke-linejoin="round"/><path d="M8.400 13.100v-5.200h-3.600l6.200-7.200l6.700 7.200h-3.600v5.200z" fill="url(#gG)" stroke="#a0a0a0" stroke-width=".8" stroke-linejoin="round"/></g>
<path d="M1366 117h8l-4 4.5z" fill="#cfcfcf"/>
<g transform="translate(1381,107)"><path d="M3.500 3.500l10-2.500l9 3v13.500l-8.500 5.500l-12-4z" fill="url(#gB)" stroke="#16335e" stroke-width="1" stroke-linejoin="round"/><path d="M6.500 5l-1.500 11.500l9 3l6-3.500v-10.500l-6-1.500z" fill="#5a8fd4" stroke="#16335e" stroke-width=".8"/><path d="M11.500 4v10l-6.500 2.500M11.500 14l8.500 2" fill="none" stroke="#16335e" stroke-width=".8"/><path d="M5 16.500l6.500-2.500l8.500 2l-6 3.500z" fill="#7aaae2"/></g>
<g transform="translate(1414,107)"><path d="M1 3l9-2l13 2.500v13l-3.500 2h-18.500z" fill="url(#gBd)" stroke="#16335e" stroke-width=".8"/><path d="M1 3l18.500 2v13.500h-18.500z" fill="#4a7ec4" stroke="#16335e" stroke-width=".7"/><path d="M4.500 9.500l10.500-3.500l1.200 0.600v3.600l-6.500 2.200v2l5-1.500l1.200 0.600v3.100l-5 1.500v5.200l-4 1l-1.200-0.700z" fill="#3a3a3a"/><path d="M3.500 9l10.500-3.500v3.800l-6.500 2.200v2l5-1.500v3.300l-5 1.500v5.200l-4 1z" fill="#7ed321" stroke="#2f6f0a" stroke-width=".8" stroke-linejoin="round"/></g>
<g transform="translate(1447,107)"><path d="M1 5l10-3.500l12 2.500v13.500l-10 5l-12-3.500z" fill="#bdbdbd" stroke="#979797" stroke-width=".9" stroke-linejoin="round"/><path d="M1 5l12 3l10-4l-12-2.500z" fill="#a9a9a9"/><path d="M13 8l10-4v13.500l-10 5z" fill="#d2d2d2"/><path d="M13 8v14.500M1 5l12 3l10-4" fill="none" stroke="#979797" stroke-width=".8"/></g>
<rect x="1486" y="111" width="1" height="1" fill="#b9b9b9"/><rect x="1489" y="111" width="1" height="1" fill="#b9b9b9"/><rect x="1486" y="114" width="1" height="1" fill="#b9b9b9"/><rect x="1489" y="114" width="1" height="1" fill="#b9b9b9"/><rect x="1486" y="117" width="1" height="1" fill="#b9b9b9"/><rect x="1489" y="117" width="1" height="1" fill="#b9b9b9"/><rect x="1486" y="120" width="1" height="1" fill="#b9b9b9"/><rect x="1489" y="120" width="1" height="1" fill="#b9b9b9"/><rect x="1486" y="123" width="1" height="1" fill="#b9b9b9"/><rect x="1489" y="123" width="1" height="1" fill="#b9b9b9"/><rect x="1486" y="126" width="1" height="1" fill="#b9b9b9"/><rect x="1489" y="126" width="1" height="1" fill="#b9b9b9"/>
<g transform="translate(1497,107)"><path d="M2.500 3.500h-2v17h2M19.800 3.500h2v17h-2" fill="none" stroke="#2a2a2a" stroke-width="1.200"/><path d="M2.800 7.200l8.200-3l9 2.400v9.700l-7.800 3.600l-9.400-3z" fill="url(#gBd)" stroke="#16335e" stroke-width=".8" stroke-linejoin="round"/><path d="M2.800 7.200l9.400 2.400l7.800-3l-9-2.400z" fill="#76a6e0" stroke="#16335e" stroke-width=".6" stroke-linejoin="round"/><path d="M12.200 9.600v10.300" stroke="#16335e" stroke-width=".6"/><path d="M2.800 7.200l9.400 2.400v10.300l-9.400-3z" fill="#4478c0"/></g>
<path d="M1526 117h8l-4 4.5z" fill="#555"/>
<g transform="translate(1541,107)"><circle cx="15.500" cy="8.500" r="7.500" fill="#6796d6" stroke="#244a84" stroke-width=".8"/><circle cx="8.500" cy="15" r="7.500" fill="url(#gBs)" stroke="#244a84" stroke-width=".8"/></g>
<g transform="translate(1574,107)"><circle cx="9" cy="15" r="7.500" fill="#3f74bc" stroke="#244a84" stroke-width=".8"/><circle cx="15.500" cy="8.500" r="7.500" fill="url(#gW)" stroke="#8a8a8a" stroke-width=".8"/></g>
<path d="M1624 115.5l3 3.500l-3 3.500M1628.5 115.5l3 3.500l-3 3.500" fill="none" stroke="#3a3a3a" stroke-width="1.100"/>
<rect x="1641" y="111" width="1" height="1" fill="#b9b9b9"/><rect x="1644" y="111" width="1" height="1" fill="#b9b9b9"/><rect x="1641" y="114" width="1" height="1" fill="#b9b9b9"/><rect x="1644" y="114" width="1" height="1" fill="#b9b9b9"/><rect x="1641" y="117" width="1" height="1" fill="#b9b9b9"/><rect x="1644" y="117" width="1" height="1" fill="#b9b9b9"/><rect x="1641" y="120" width="1" height="1" fill="#b9b9b9"/><rect x="1644" y="120" width="1" height="1" fill="#b9b9b9"/><rect x="1641" y="123" width="1" height="1" fill="#b9b9b9"/><rect x="1644" y="123" width="1" height="1" fill="#b9b9b9"/><rect x="1641" y="126" width="1" height="1" fill="#b9b9b9"/><rect x="1644" y="126" width="1" height="1" fill="#b9b9b9"/>
<g transform="translate(1652,107)"><path d="M2.300 1.800l13.800 1.200l2.400 5.400l-0.600 9.100l-13.200-1.200l-3-4.200z" fill="#cbcbc7" stroke="#6e6e6a" stroke-width=".9" stroke-linejoin="round"/><path d="M16.100 3l2.400 5.400l-0.600 9.100l-2.600-1.300l0.400-8.700z" fill="#a5a5a1"/><circle cx="8.900" cy="9.600" r="5.400" fill="#565656" stroke="#3a3a3a" stroke-width=".6"/><path d="M3.600 10.400a5.400 5.400 0 0 1 10.500-2.300z" fill="#f2d40e" stroke="#8a7a08" stroke-width=".6"/><path d="M16.600 8.600l1.100 0.600l-0.300 4.800l-1.100-0.500z" fill="#e8c80c"/><path d="M13.500 16.300l9 2.400l-0.600 2.200l-9-2.600z" fill="#f2d40e" stroke="#8a7a08" stroke-width=".7" stroke-linejoin="round"/><path d="M22 18.400l1.600 0.500l-0.900 3.600l-1.500-0.500z" fill="#8c8c88" stroke="#666" stroke-width=".5"/></g>
<path d="M1686 115.5l3 3.500l-3 3.500M1690.5 115.5l3 3.500l-3 3.500" fill="none" stroke="#3a3a3a" stroke-width="1.100"/></svg>
<span class="t" style="left:469px;top:72px;font-size:15.500px">Part</span>
<!-- Combo View dock -->
<span class="t" style="left:4px;top:140px">Combo View</span>
<div class="dockb" style="left:411px;top:143px"><svg class="a" style="left:-1px;top:-1px" width="11" height="11"><rect x="4.5" y="2.5" width="4" height="4" rx="1" fill="none" stroke="#6a6865"/><rect x="2.5" y="4.5" width="4" height="4" rx="1" fill="#efefef" stroke="#6a6865"/></svg></div>
<div class="dockb" style="left:425px;top:143px"><svg class="a" style="left:-1px;top:-1px" width="11" height="11"><path d="M3 3l5 5M8 3l-5 5" stroke="#5a5855" stroke-width="1.7" fill="none"/></svg></div>
<!-- tab pane -->
<div class="a" style="left:0;top:185px;width:438px;height:982px;border:1px solid #b1b1b1;border-left-color:#c6c6c6"></div>
<div class="a" style="left:68px;top:160px;width:61px;height:26px;border:1px solid #bcbcbc;border-bottom:none;border-radius:3px 3px 0 0;background:linear-gradient(#eeeeee,#e6e6e6)"></div>
<div class="a" style="left:1px;top:158px;width:67px;height:28px;border:1px solid #b9b9b9;border-bottom:none;border-radius:4px 4px 0 0;background:linear-gradient(#fafafa,#efefef)"></div>
<span class="t" style="left:12px;top:163px;letter-spacing:0.6px">Model</span>
<span class="t" style="left:80px;top:164px;letter-spacing:-0.2px">Tasks</span>
<!-- tree -->
<div class="a" style="left:2px;top:187px;width:434px;height:449px;border:1px solid #a9a9a9;background:#fff"></div>
<div class="a" style="left:3px;top:188px;width:432px;height:21px;background:#efefef"></div>
<div class="a hdr" style="left:3px;top:188px;width:336px;height:21px;border-bottom:1px solid #b4b4b4"></div>
<div class="a" style="left:237px;top:189px;width:1px;height:19px;background:#d4d4d4"></div>
<span class="t" style="left:5px;top:190px;letter-spacing:.27px">Labels &amp; Attributes</span>
<span class="t" style="left:241px;top:190px;letter-spacing:0.38px">Description</span>
<span class="t" style="left:6px;top:209px;letter-spacing:0.4px">Application</span>
<span class="t" style="left:48px;top:227px;font-weight:bold;letter-spacing:.2px">cam-mount-bottom-offset</span>
<span class="t" style="left:68px;top:246px">Exploded Slice</span>
<span class="t" style="left:88px;top:265px;letter-spacing:-0.1px">Fusion001</span>
<div class="a sel" style="left:3px;top:283px;width:336px;height:38px"></div>
<span class="t" style="left:108px;top:284px;color:#fff">Fusion</span>
<span class="t" style="left:108px;top:303px;color:#fff;letter-spacing:-0.3px">Slice.1</span>
<!-- splitter dots -->
<div class="a" style="left:212px;top:637px;width:17px;height:1px;background-image:linear-gradient(90deg,#b0b0b0 1px,transparent 1px);background-size:3px 1px"></div>
<!-- property table -->
<div class="a" style="left:2px;top:640px;width:434px;height:499px;border:1px solid #a9a9a9;background:#fff"></div>
<div class="a" style="left:4px;top:642px;width:430px;height:495px;border:1px solid #cfcfcf"></div>
<div class="a hdr" style="left:5px;top:643px;width:428px;height:20px"></div>
<div class="a" style="left:104px;top:644px;width:1px;height:18px;background:#d0d0d0"></div>
<span class="t" style="left:7px;top:645px;letter-spacing:.45px">Property</span>
<span class="t" style="left:107px;top:645px;letter-spacing:.2px">Value</span>
<div class="a" style="left:5px;top:663px;width:428px;height:23px;background:#a0a0a0"></div>
<span class="t" style="left:28px;top:667px;color:#fff;font-weight:bold;letter-spacing:-.35px">Base</span>
<div class="a" style="left:105px;top:686px;width:328px;height:22px;background:#f7f7f7"></div>
<div class="a sel" style="left:5px;top:686px;width:99px;height:22px"></div>
<div class="a" style="left:25px;top:707px;width:408px;height:1px;background:#d0d0d0"></div>
<div class="a" style="left:25px;top:729px;width:408px;height:1px;background:#d0d0d0"></div>
<div class="a" style="left:104px;top:686px;width:1px;height:44px;background:#d0d0d0"></div>
<svg class="a" style="left:12px;top:692px" width="6" height="10"><path d="M0.5 0.5l4.5 4.5l-4.5 4.5z" fill="#1d3c52"/></svg>
<span class="t" style="left:28px;top:689px;color:#fff;letter-spacing:.18px">Placement</span>
<span class="t" style="left:28px;top:711px;letter-spacing:.02px">Label</span>
<span class="t" style="left:108px;top:711px;letter-spacing:-.1px">Fusion</span>
<!-- bottom tabs -->
<div class="a" style="left:2px;top:1137px;width:59px;height:26px;border:1px solid #bcbcbc;border-top:none;border-radius:0 0 3px 3px;background:linear-gradient(#e6e6e6,#ececec)"></div>
<div class="a" style="left:60px;top:1137px;width:57px;height:28px;border:1px solid #b9b9b9;border-top:none;border-radius:0 0 4px 4px;background:linear-gradient(#f6f6f6,#fbfbfb)"></div>
<span class="t" style="left:14px;top:1142px;letter-spacing:0.55px">View</span>
<span class="t" style="left:72px;top:1143px;letter-spacing:0.18px">Data</span>
<!-- 3D view -->
<div class="a" id="v3d" style="left:444px;top:139px;width:1254px;height:997px;background:linear-gradient(#333365,#aaaac3)"></div>
<!-- MDI tabs -->
<div class="a" style="left:849px;top:1137px;width:849px;height:1px;background:#c6c6c6"></div>
<div class="a" style="left:444px;top:1137px;width:140px;height:27px;border:1px solid #bcbcbc;border-top:none;border-radius:0 0 3px 3px;background:linear-gradient(#dddddd,#e1e1e1)"></div>
<div class="a" style="left:583px;top:1137px;width:266px;height:30px;border:1px solid #b9b9b9;border-top:none;border-radius:0 0 4px 4px;background:linear-gradient(#f1f1f1,#f7f7f7)"></div>
<span class="t" style="left:476px;top:1143px;letter-spacing:.2px">Start page</span>
<span class="t" style="left:615px;top:1144px;letter-spacing:.3px">cam-mount-bottom-offset : 1</span>
<!-- splitter dots -->
<div class="a" style="left:842px;top:1170px;width:17px;height:1px;background-image:linear-gradient(90deg,#b0b0b0 1px,transparent 1px);background-size:3px 1px"></div>
<div class="a" style="left:441px;top:647px;width:1px;height:17px;background-image:linear-gradient(#b0b0b0 1px,transparent 1px);background-size:1px 3px"></div>
<div class="a" style="left:225px;top:1273px;width:1px;height:16px;background-image:linear-gradient(#b0b0b0 1px,transparent 1px);background-size:1px 3px"></div>
<!-- Report view -->
<span class="t" style="left:4px;top:1175px;letter-spacing:0.35px">Report view</span>
<span class="t" style="left:232px;top:1175px;letter-spacing:.2px">Python console</span>
<div class="a" style="left:0;top:1193px;width:222px;height:192px;border:1px solid #a9a9a9;background:#fff"></div>
<div class="a" style="left:228px;top:1193px;width:1470px;height:192px;border:1px solid #a9a9a9;background:#fff"></div>
<!-- status bar -->
<span class="t" style="left:1437px;top:1392px;letter-spacing:0.2px">Blender</span>
<!-- fitted text -->
<span class="t" style="left:1.9px;top:1392px;letter-spacing:0.14px">Preselected:</span>
<span class="t" style="left:89.6px;top:1392px;letter-spacing:-0.13px">Unnamed.Fusion001.Face217</span>
<span class="t" style="left:291.5px;top:1392px;letter-spacing:0.07px">(25.354254</span>
<span class="t" style="left:371.1px;top:1392px;letter-spacing:-0.16px">mm,</span>
<span class="t" style="left:404.1px;top:1392px;letter-spacing:0.09px">30.844175</span>
<span class="t" style="left:478.6px;top:1392px;letter-spacing:0.21px">mm,</span>
<span class="t" style="left:511.9px;top:1392px;letter-spacing:-0.09px">54.825001</span>
<span class="t" style="left:586.7px;top:1392px;letter-spacing:0.00px">mm)</span>
<span class="t" style="left:108.1px;top:689px;letter-spacing:0.09px">[(0.00</span>
<span class="t" style="left:150.4px;top:689px;letter-spacing:-0.18px">0.00</span>
<span class="t" style="left:183.5px;top:689px;letter-spacing:-0.24px">1.00);</span>
<span class="t" style="left:224.0px;top:689px;letter-spacing:-0.15px">0.00</span>
<span class="t" style="left:256.2px;top:689px;letter-spacing:-0.54px">°;</span>
<span class="t" style="left:268.4px;top:689px;letter-spacing:-0.06px">(0.00</span>
<span class="t" style="left:305.8px;top:689px;letter-spacing:0.05px">mm</span>
<span class="t" style="left:338.6px;top:689px;letter-spacing:-0.15px">0.00</span>
<span class="t" style="left:371.1px;top:689px;letter-spacing:0.15px">mm</span>
<span class="t" style="left:403.7px;top:689px;letter-spacing:-0.32px">0…</span>
<span class="t" style="left:1508.8px;top:1392px;letter-spacing:-0.03px">429.47</span>
<span class="t" style="left:1558.3px;top:1392px;letter-spacing:0.20px">mm</span>
<span class="t" style="left:1586.7px;top:1392px;letter-spacing:1.50px">x</span>
<span class="t" style="left:1598.7px;top:1392px;letter-spacing:-0.03px">341.45</span>
<span class="t" style="left:1648.1px;top:1392px;letter-spacing:0.40px">mm</span>
<!-- 3D model -->
<svg class="a" style="left:444px;top:139px" width="1254" height="997" viewBox="444 139 1254 997" shape-rendering="crispEdges">
<polygon points="967.6,703.6 1252.2,891.8 1237.1,900.2 1260.5,914.6 1249.1,920.0 1226.3,905.5 1203.5,918.6 1218.3,927.7 1225.0,933.7 1213.6,939.1 1191.5,925.0 1178.7,932.0 909.1,753.5 893.8,744.6 908.7,736.4 885.6,723.0 898.3,715.5 919.2,730.4 931.8,723.7 943.0,717.0 920.7,705.1 919.5,702.9 931.8,696.5 952.7,711.8" fill="#868686" stroke="#151515" stroke-width="1.6" stroke-linejoin="round" />
<polyline points="909.1,753.5 981.7,713.7" fill="none" stroke="#151515" stroke-width="1.7" stroke-linecap="round" stroke-linejoin="round" />
<polyline points="1037.4,838.6 1079.8,815.6" fill="none" stroke="#151515" stroke-width="1.7" stroke-linecap="round" stroke-linejoin="round" />
<polygon points="909.1,753.5 1178.7,932.0 1176.7,949.5 906.9,771.0" fill="#8e8e8e" stroke="#151515" stroke-width="1.6" stroke-linejoin="round" />
<polyline points="1036.8,838.2 1035.2,855.6" fill="none" stroke="#151515" stroke-width="1.7" stroke-linecap="round" stroke-linejoin="round" />
<polygon points="893.8,744.6 909.1,753.5 906.9,771.0 891.6,761.0" fill="#909090" stroke="#151515" stroke-width="1.6" stroke-linejoin="round" />
<polygon points="885.6,723.4 908.7,736.4 894.5,745.0 883.4,739.4" fill="#8e8e8e" stroke="#151515" stroke-width="1.6" stroke-linejoin="round" />
<polyline points="886.5,723.2 908.2,735.6" fill="none" stroke="#151515" stroke-width="3.2" stroke-linecap="round" stroke-linejoin="round" />
<ellipse cx="895.6" cy="737.2" rx="2.6" ry="2" fill="#151515" transform="rotate(35 895.6 737.2)"/>
<polygon points="920.7,705.1 943.0,717.0 931.8,723.7 913.2,714.8" fill="#c0c0c0" stroke="#151515" stroke-width="1.2" stroke-linejoin="round" />
<polyline points="921.5,704.6 943.0,716.2" fill="none" stroke="#151515" stroke-width="3.2" stroke-linecap="round" stroke-linejoin="round" />
<polyline points="913.8,715.4 931.4,724.2" fill="none" stroke="#151515" stroke-width="3.2" stroke-linecap="round" stroke-linejoin="round" />
<polygon points="1252.2,891.8 1237.1,900.2 1250.5,906.6" fill="#787878" stroke="#151515" stroke-width="1.6" stroke-linejoin="round" />
<polygon points="1178.7,932.0 1191.5,925.0 1189.8,941.1 1176.7,949.5" fill="#6e6e6e" stroke="#151515" stroke-width="1.6" stroke-linejoin="round" />
<polygon points="1192.1,926.3 1213.6,939.1 1211.9,955.8 1189.8,941.1" fill="#909090" stroke="#151515" stroke-width="1.6" stroke-linejoin="round" />
<polygon points="1213.6,939.1 1225.0,933.7 1231.4,936.4 1223.7,949.8 1211.9,955.8" fill="#6e6e6e" stroke="#151515" stroke-width="1.6" stroke-linejoin="round" />
<polyline points="1192.6,925.6 1213.4,938.4" fill="none" stroke="#151515" stroke-width="3.4" stroke-linecap="round" stroke-linejoin="round" />
<rect x="1199.6" y="939" width="3.6" height="4.2" fill="#151515"/>
<polygon points="1203.5,918.6 1226.3,905.9 1219.6,916.9 1223.0,923.0 1218.3,927.7" fill="#787878" stroke="#151515" stroke-width="1.6" stroke-linejoin="round" />
<polygon points="1226.3,908.2 1247.1,920.3 1241.1,929.7 1219.6,916.9" fill="#c0c0c0" stroke="#151515" stroke-width="1.2" stroke-linejoin="round" />
<polyline points="1227.0,906.5 1248.3,919.3" fill="none" stroke="#151515" stroke-width="3.4" stroke-linecap="round" stroke-linejoin="round" />
<polyline points="1219.6,917.6 1240.6,930.2" fill="none" stroke="#151515" stroke-width="3.4" stroke-linecap="round" stroke-linejoin="round" />
<polygon points="1249.1,920.0 1260.2,914.9 1258.5,929.7 1245.1,937.4 1241.1,929.7" fill="#6e6e6e" stroke="#151515" stroke-width="1.6" stroke-linejoin="round" />
<polygon points="1159.7,352.3 1162.0,347.7 1171.6,341.0 1217.5,326.0 1255.5,355.0 1250.0,377.0 1247.7,396.7 1240.9,400.4 1232.6,399.5 1162.0,354.1" fill="#8a8a8a" stroke="#151515" stroke-width="1.6" stroke-linejoin="round" />
<polygon points="1236.3,400.0 1247.7,396.7 1250.9,377.9 1279.8,362.8 1279.8,369.7 1285.8,373.4 1283.8,376.5 1199.8,872.0 1152.8,899.7" fill="#6e6e6e" stroke="#151515" stroke-width="1.6" stroke-linejoin="round" />
<polygon points="1279.8,369.7 1285.8,373.4 1285.3,376.1 1277.1,380.7 1276.8,377.0" fill="#858585" stroke="#151515" stroke-width="1.4" stroke-linejoin="round" />
<polygon points="1160.8,352.3 1162.0,354.1 1232.6,399.5 1236.3,400.0 1152.8,899.7 1075.5,848.1" fill="#909090" stroke="#151515" stroke-width="1.6" stroke-linejoin="round" />
<polyline points="1161.0,352.8 1076.0,846.5" fill="none" stroke="#151515" stroke-width="3.6" stroke-linecap="round" stroke-linejoin="round" />
<polyline points="1162.0,354.1 1232.6,399.5 1240.9,400.4 1247.7,396.7" fill="none" stroke="#151515" stroke-width="1.8" stroke-linecap="round" stroke-linejoin="round" />
<polyline points="1236.4,403.0 1154.6,895.0" fill="none" stroke="#151515" stroke-width="8" stroke-linecap="round" stroke-linejoin="round" stroke-linecap="butt"/>
<polyline points="1236.8,406.0 1155.6,893.0" fill="none" stroke="#cdcdcd" stroke-width="1.3" stroke-linecap="round" stroke-linejoin="round" stroke-dasharray="1.2 4.5" stroke-linecap="butt"/>
<polyline points="1235.0,407.5 1153.8,894.5" fill="none" stroke="#a8a8a8" stroke-width="1.2" stroke-linecap="round" stroke-linejoin="round" stroke-dasharray="1 4.7" stroke-dashoffset="-1.6" stroke-linecap="butt"/>
<polyline points="1075.0,848.0 1152.5,898.5" fill="none" stroke="#151515" stroke-width="6" stroke-linecap="round" stroke-linejoin="round" />
<polyline points="1080.0,851.0 1148.0,895.0" fill="none" stroke="#c4c4c4" stroke-width="1.1" stroke-linecap="round" stroke-linejoin="round" stroke-dasharray="1 1.6" stroke-linecap="butt"/>
<polyline points="1079.0,853.0 1147.0,897.0" fill="none" stroke="#b4b4b4" stroke-width="1.1" stroke-linecap="round" stroke-linejoin="round" stroke-dasharray="1 1.6" stroke-dashoffset="1.3" stroke-linecap="butt"/>
<polyline points="1153.0,898.8 1200.0,873.0" fill="none" stroke="#151515" stroke-width="5.6" stroke-linecap="round" stroke-linejoin="round" />
<polyline points="1158.0,894.6 1196.0,873.8" fill="none" stroke="#c4c4c4" stroke-width="1.1" stroke-linecap="round" stroke-linejoin="round" stroke-dasharray="1 1.6" stroke-linecap="butt"/>
<polyline points="1159.0,896.6 1197.0,875.8" fill="none" stroke="#b4b4b4" stroke-width="1.1" stroke-linecap="round" stroke-linejoin="round" stroke-dasharray="1 1.6" stroke-dashoffset="1.3" stroke-linecap="butt"/>
<path d="M1071.3 849.5l0.200-3.600l5.200-4.400l3.500 4.500l-3 6.500z" fill="#151515"/><circle cx="1153" cy="898" r="4.6" fill="#151515"/><circle cx="1200" cy="872.3" r="3.2" fill="#151515"/>
<polyline points="1283.8,376.0 1199.8,872.0" fill="none" stroke="#151515" stroke-width="2.4" stroke-linecap="round" stroke-linejoin="round" />
<polygon points="1200.1,310.5 1217.5,322.0 1187.7,336.2 1171.6,326.1" fill="#8a8a8a" stroke="#151515" stroke-width="1.6" stroke-linejoin="round" />
<polygon points="1171.6,326.1 1187.7,336.2 1185.4,355.0 1168.4,344.9" fill="#929292" stroke="#151515" stroke-width="1.6" stroke-linejoin="round" />
<polygon points="1187.7,336.2 1217.5,322.0 1214.7,339.4 1185.4,355.0" fill="#787878" stroke="#151515" stroke-width="1.6" stroke-linejoin="round" />
<polyline points="1172.4,326.6 1187.7,336.2 1216.6,322.6" fill="none" stroke="#151515" stroke-width="3.8" stroke-linecap="round" stroke-linejoin="round" />
<polyline points="1187.5,337.0 1185.6,354.2" fill="none" stroke="#151515" stroke-width="3.8" stroke-linecap="round" stroke-linejoin="round" />
<ellipse cx="1179" cy="340.8" rx="2.8" ry="2.3" fill="#151515" transform="rotate(35 1179 340.8)"/>
<polygon points="1262.9,352.3 1279.8,362.8 1250.9,377.9 1233.5,367.9" fill="#8a8a8a" stroke="#151515" stroke-width="1.6" stroke-linejoin="round" />
<polygon points="1233.5,367.9 1250.9,377.9 1247.7,396.7 1230.8,386.2" fill="#929292" stroke="#151515" stroke-width="1.6" stroke-linejoin="round" />
<polyline points="1234.3,368.4 1250.5,377.7" fill="none" stroke="#151515" stroke-width="3.6" stroke-linecap="round" stroke-linejoin="round" />
<polyline points="1250.9,377.9 1279.8,362.8" fill="none" stroke="#151515" stroke-width="1.8" stroke-linecap="round" stroke-linejoin="round" />
<ellipse cx="1240.4" cy="382.1" rx="2.8" ry="2.3" fill="#151515" transform="rotate(35 1240.4 382.1)"/>
</svg>
<!-- nav cube + axis cross -->
<svg class="a" style="left:444px;top:139px" width="1254" height="997" viewBox="444 139 1254 997" shape-rendering="crispEdges" text-rendering="geometricPrecision">
<polygon points="1625.0,146.9 1613.5,158.3 1636.5,158.3" fill="#9193b3"/>
<polygon points="1625.0,278.2 1612.7,266.1 1637.2,266.1" fill="#9a9cba"/>
<polygon points="1559.0,212.2 1571.0,200.7 1571.0,224.3" fill="#9193b3"/>
<polygon points="1691.0,212.2 1678.9,200.7 1678.9,224.3" fill="#9193b3"/>
<polygon points="1606.6,152.3 1604.3,153.0 1602.0,153.9 1599.7,154.8 1597.5,155.8 1595.4,156.9 1593.2,158.1 1591.2,159.4 1589.1,160.7 1587.1,162.1 1585.2,163.6 1583.4,165.2 1581.6,166.9 1579.8,168.6 1578.2,170.3 1575.1,167.5 1576.2,182.0 1587.2,178.5 1584.1,175.7 1585.6,174.1 1587.1,172.7 1588.7,171.2 1590.3,169.8 1592.0,168.5 1593.7,167.3 1595.4,166.1 1597.3,165.0 1599.1,164.0 1601.0,163.0 1602.9,162.1 1604.9,161.3 1606.9,160.6 1608.9,159.9" fill="#9193b3"/>
<polygon points="1643.4,152.3 1645.7,153.0 1648.0,153.9 1650.3,154.8 1652.5,155.8 1654.6,156.9 1656.8,158.1 1658.8,159.4 1660.9,160.7 1662.9,162.1 1664.8,163.6 1666.6,165.2 1668.4,166.9 1670.2,168.6 1671.8,170.3 1674.9,167.5 1673.8,182.0 1662.8,178.5 1665.9,175.7 1664.4,174.1 1662.9,172.7 1661.3,171.2 1659.7,169.8 1658.0,168.5 1656.3,167.3 1654.6,166.1 1652.7,165.0 1650.9,164.0 1649.0,163.0 1647.1,162.1 1645.1,161.3 1643.1,160.6 1641.1,159.9" fill="#9193b3"/>
<polygon points="1624.4,175.9 1635.3,177.9 1657.8,188.7 1662.8,194.2 1663.6,200.4 1654.7,227.6 1648.5,234.6 1627.5,252.4 1618.2,252.4 1595.6,233.8 1589.8,224.5 1587.5,198.8 1590.2,191.1 1598.7,181.8 1615.8,176.7" fill="#a9abc7"/>
<polygon points="1593.3,188.0 1599.9,185.5 1623.6,198.8 1624.4,209.7 1618.2,211.7 1590.4,196.1" fill="#9294b6"/>
<polygon points="1636.0,204.4 1656.8,190.9 1662.8,194.2 1663.2,200.8 1639.9,213.6 1633.7,209.7" fill="#9294b6"/>
<polygon points="1622.8,217.5 1632.1,222.1 1630.2,250.5 1627.5,252.4 1618.6,252.4 1618.6,250.5" fill="#9294b6"/>
<polygon points="1621.3,200.4 1636.0,204.4 1639.9,213.6 1632.1,222.1 1622.8,217.5 1618.2,211.7" fill="#9a9cbc"/>
<polygon points="1599.9,185.5 1619.7,177.5 1629.0,177.7 1656.8,190.9 1636.0,204.4 1621.3,200.4" fill="#c9c9db"/>
<polygon points="1590.4,196.1 1618.2,211.7 1622.8,217.5 1618.6,250.5 1596.0,233.4 1589.8,224.1" fill="#c9c9db"/>
<polygon points="1639.9,213.6 1662.8,200.8 1654.7,227.6 1630.2,250.5 1632.1,222.1" fill="#c9c9db"/>
<circle cx="1632.1" cy="213.6" r="7.3" fill="#c3c4d9" opacity=".8"/>
<path d="M1584.4 229.7L1581.8 197.3" stroke="#00f000" stroke-width="2.2"/>
<path d="M1589.8 227.0L1611.9 215.3" stroke="#ff9a9a" stroke-width="1.6" opacity=".85"/>
<path d="M1584.4 229.7L1590.4 226.7" stroke="#ff0000" stroke-width="2.4"/>
<path d="M1584.4 229.7L1610.0 254.5" stroke="#0000ff" stroke-width="2"/>
<path d="M1623.6 181.8L1622.8 203.5M1625.9 213.6L1643.0 224.5" stroke="#8688ac" stroke-width=".8" fill="none"/>
<text x="1585.5" y="180.4" fill="#22ee22" font-size="8.5" font-family="Liberation Sans, DejaVu Sans, sans-serif" text-anchor="middle"  transform="rotate(0 1585.5 180.4)">Y</text>
<text x="1627.5" y="266.6" fill="#2020ff" font-size="9.5" font-family="Liberation Sans, DejaVu Sans, sans-serif" text-anchor="middle"  transform="rotate(0 1627.5 266.6)">Z</text>
<text x="1625.5" y="210.5" fill="#ff8a8a" font-size="8" font-family="Liberation Sans, DejaVu Sans, sans-serif" text-anchor="middle"  transform="rotate(0 1625.5 210.5)">X</text>
<text fill="#000" font-size="7.6" font-weight="bold" font-style="italic" font-family="Liberation Sans, DejaVu Sans, sans-serif" text-anchor="middle" transform="translate(1628.4 188.9) rotate(157) scale(1 .82)" x="0" y="2.6">REAR</text>
<text x="1602.6" y="222.9" fill="#000" font-size="8.5" font-family="Liberation Sans, DejaVu Sans, sans-serif" text-anchor="middle" font-weight="bold" font-style="italic" transform="rotate(76 1602.6 222.9)">LEFT</text>
<text x="1647.7" y="227.0" fill="#000" font-size="6.2" font-family="Liberation Sans, DejaVu Sans, sans-serif" text-anchor="middle" font-weight="bold" font-style="italic" transform="rotate(-42 1647.7 227.0)">TOP</text>
<polygon points="1658.0,253.6 1667.8,257.9 1667.8,269.1 1658.0,273.3 1648.1,269.1 1648.1,257.9" fill="#8486aa"/>
<polygon points="1658.0,253.6 1667.8,257.9 1658.0,262.1 1648.1,257.9" fill="#9496b8"/>
<polygon points="1648.1,257.9 1658.0,262.1 1658.0,273.3 1648.1,269.1" fill="#7a7ca0"/>
<polygon points="1672.0,260.0 1684.2,260.0 1678.0,266.4" fill="#3e3f63"/>
<path d="M1648.3 1086.7L1651.7 1065.8" stroke="#1f8a1f" stroke-width="1.8"/>
<polygon points="1654.2,1053.9 1655.9,1067.5 1648.3,1064.5" fill="#1f8a1f"/>
<path d="M1648.3 1086.7L1661.0 1079.3" stroke="#8a1f1f" stroke-width="1.8"/>
<polygon points="1667.1,1075.3 1663.1,1081.9 1659.3,1076.6" fill="#8a1f1f"/>
<path d="M1648.3 1086.7L1667.8 1099.2" stroke="#1f1f8a" stroke-width="1.8"/>
<polygon points="1676.9,1105.4 1664.4,1101.8 1669.1,1095.8" fill="#1f1f8a"/>
<text x="1659.6" y="1053.7" fill="#000" font-size="10" font-family="Liberation Sans, DejaVu Sans, sans-serif" text-anchor="middle">Y</text>
<text x="1672.5" y="1075.9" fill="#000" font-size="10" font-family="Liberation Sans, DejaVu Sans, sans-serif" text-anchor="middle">X</text>
<text x="1682.4" y="1105.8" fill="#000" font-size="10" font-family="Liberation Sans, DejaVu Sans, sans-serif" text-anchor="middle">Z</text>
</svg>
<!-- consoles -->
<style>.o{color:#ffb21c}.k{color:#1a1a1a}.g{color:#a4a4a4}.r{color:#ff1a1a}.c{color:#10b010}</style>
<div class="a" style="left:0;top:1194px;width:207px;height:190px;overflow:hidden">
<div class="mono o" style="left:5px;top:-2px">05:00:35  No object</div>
<div class="mono o" style="left:5px;top:14px">selected.</div>
<div class="mono o" style="left:5px;top:30px">05:01:39  </div>
<div class="mono o" style="left:5px;top:46px">Part::FeaturePython /</div>
<div class="mono o" style="left:5px;top:62px">Slice: Links go out of</div>
<div class="mono o" style="left:5px;top:78px">the allowed scope</div>
<div class="mono o" style="left:5px;top:94px">05:09:00  No object</div>
<div class="mono o" style="left:5px;top:110px">selected.</div>
<div class="mono k" style="left:5px;top:126px">05:13:58  &lt;Import&gt; </div>
<div class="mono k" style="left:5px;top:142px">ImportOCAF2.cpp(541):</div>
<div class="mono k" style="left:5px;top:158px">free shape count 1</div>
</div>
<div class="a" style="left:229px;top:1194px;width:1455px;height:190px;overflow:hidden">
<div class="mono k" style="left:4px;top:0px">ent<span class="g">(</span><span class="r">&#x27;Unnamed&#x27;</span><span class="g">).</span>getObject<span class="g">(</span><span class="r">&#x27;Fusion001&#x27;</span><span class="g">).</span>ViewObject<span class="g">.</span>ShapeColor<span class="g">)</span></div>
<div class="mono k" style="left:4px;top:16px"><span class="g">&gt;&gt;&gt; </span></div>
<div class="mono k" style="left:4px;top:32px">App<span class="g">.</span>getDocument<span class="g">(</span><span class="r">&#x27;Unnamed&#x27;</span><span class="g">).</span>getObject<span class="g">(</span><span class="r">&#x27;Fusion001&#x27;</span><span class="g">).</span>ViewObject<span class="g">.</span>DisplayMode<span class="g">=</span>getattr<span class="g">(</span>App<span class="g">.</span>getDocument<span class="g">(</span><span class="r">&#x27;Unnamed&#x27;</span><span class="g">).</span>getObject<span class="g">(</span><span class="r">&#x27;Fusion&#x27;</span><span class="g">).</span>getLinkedObject<span class="g">(</span>True<span class="g">).</span>ViewObject<span class="g">,</span><span class="r">&#x27;DisplayMode&#x27;</span><span class="g">,</span>App<span class="g">.</span>getDoc</div>
<div class="mono k" style="left:4px;top:48px">ument<span class="g">(</span><span class="r">&#x27;Unnamed&#x27;</span><span class="g">).</span>getObject<span class="g">(</span><span class="r">&#x27;Fusion001&#x27;</span><span class="g">).</span>ViewObject<span class="g">.</span>DisplayMode<span class="g">)</span></div>
<div class="mono k" style="left:4px;top:64px"><span class="g">&gt;&gt;&gt; </span>App<span class="g">.</span>ActiveDocument<span class="g">.</span>recompute<span class="g">()</span></div>
<div class="mono k" style="left:4px;top:80px"><span class="g">&gt;&gt;&gt; </span><span class="c">### End command Part_Fuse</span></div>
<div class="mono k" style="left:4px;top:96px"><span class="g">&gt;&gt;&gt; </span><span class="c">### Begin command Std_Save</span></div>
<div class="mono k" style="left:4px;top:112px"><span class="g">&gt;&gt;&gt; </span>Gui<span class="g">.</span>SendMsgToActiveView<span class="g">(</span><span class="r">&quot;Save&quot;</span><span class="g">)</span></div>
<div class="mono k" style="left:4px;top:128px"><span class="g">&gt;&gt;&gt; </span>App<span class="g">.</span>getDocument<span class="g">(</span><span class="r">&quot;Unnamed&quot;</span><span class="g">).</span>saveAs<span class="g">(</span>u"<span class="r">/home/thomas/Downloads/cam-mount-bottom-offset.FCStd&quot;</span><span class="g">)</span></div>
<div class="mono k" style="left:4px;top:144px"><span class="g">&gt;&gt;&gt; </span><span class="c">### End command Std_Save</span></div>
<div class="mono k" style="left:4px;top:160px"><span class="g">&gt;&gt;&gt; </span></div>
</div>
<div class="a" style="left:207px;top:1194px;width:14px;height:190px;border-left:1px solid #b4b4b4;background:linear-gradient(90deg,#dcdcdc,#ededed)"></div>
<div class="a" style="left:208px;top:1194px;width:13px;height:14px;background:linear-gradient(90deg,#f0f0f0,#fcfcfc);border-bottom:1px solid #c0c0c0"></div>
<div class="a" style="left:208px;top:1369px;width:13px;height:15px;background:linear-gradient(90deg,#f0f0f0,#fcfcfc);border-top:1px solid #c0c0c0"></div>
<div class="a" style="left:208px;top:1212px;width:13px;height:156px;background:linear-gradient(90deg,#ececec,#fbfbfb);border-top:1px solid #b8b8b8;border-bottom:1px solid #b8b8b8"></div>
<svg class="a" style="left:210px;top:1198px" width="9" height="5"><path d="M0.500 4.500L4.500 0.300L8.500 4.500z" fill="#4d4d4d"/></svg>
<svg class="a" style="left:210px;top:1375px" width="9" height="5"><path d="M0.500 0.500L4.500 4.700L8.500 0.500z" fill="#4d4d4d"/></svg>
<div class="a" style="left:1683px;top:1194px;width:14px;height:190px;border-left:1px solid #b4b4b4;background:linear-gradient(90deg,#dcdcdc,#ededed)"></div>
<div class="a" style="left:1684px;top:1194px;width:13px;height:14px;background:linear-gradient(90deg,#f0f0f0,#fcfcfc);border-bottom:1px solid #c0c0c0"></div>
<div class="a" style="left:1684px;top:1369px;width:13px;height:15px;background:linear-gradient(90deg,#f0f0f0,#fcfcfc);border-top:1px solid #c0c0c0"></div>
<div class="a" style="left:1684px;top:1343px;width:13px;height:27px;background:linear-gradient(90deg,#ececec,#fbfbfb);border-top:1px solid #b8b8b8;border-bottom:1px solid #b8b8b8"></div>
<svg class="a" style="left:1686px;top:1198px" width="9" height="5"><path d="M0.500 4.500L4.500 0.300L8.500 4.500z" fill="#4d4d4d"/></svg>
<svg class="a" style="left:1686px;top:1375px" width="9" height="5"><path d="M0.500 0.500L4.500 4.700L8.500 0.500z" fill="#4d4d4d"/></svg>
<div class="dockb" style="left:195px;top:1178px"><svg class="a" style="left:-1px;top:-1px" width="11" height="11"><rect x="4.5" y="2.5" width="4" height="4" rx="1" fill="none" stroke="#6a6865"/><rect x="2.5" y="4.5" width="4" height="4" rx="1" fill="#efefef" stroke="#6a6865"/></svg></div>
<div class="dockb" style="left:209px;top:1178px"><svg class="a" style="left:-1px;top:-1px" width="11" height="11"><path d="M3 3l5 5M8 3l-5 5" stroke="#5a5855" stroke-width="1.7" fill="none"/></svg></div>
<div class="dockb" style="left:1671px;top:1178px"><svg class="a" style="left:-1px;top:-1px" width="11" height="11"><rect x="4.5" y="2.5" width="4" height="4" rx="1" fill="none" stroke="#6a6865"/><rect x="2.5" y="4.5" width="4" height="4" rx="1" fill="#efefef" stroke="#6a6865"/></svg></div>
<div class="dockb" style="left:1685px;top:1178px"><svg class="a" style="left:-1px;top:-1px" width="11" height="11"><path d="M3 3l5 5M8 3l-5 5" stroke="#5a5855" stroke-width="1.7" fill="none"/></svg></div>
<!-- misc icons -->
<svg class="a" style="left:0;top:0;pointer-events:none" width="1698" height="1416" viewBox="0 0 1698 1416"><path d="M9.1 233.6h7.6l-3.8 4z" fill="#555"/>
<path d="M29.2 252.2h7.6l-3.8 4z" fill="#555"/>
<path d="M49.2 271.5h7.6l-3.8 4z" fill="#555"/>
<path d="M71 288.7v7.400l4-3.700z" fill="#17405c"/>
<path d="M71 307.6v7.400l4-3.700z" fill="#17405c"/>
<rect x="27.500" y="228" width="13" height="14" rx="1.500" fill="#f6f6f6" stroke="#a4a4a4" stroke-width=".9"/>
<circle cx="36.300" cy="232.300" r="3.300" fill="#dd1818"/>
<path d="M29.800 234.300l3.200-1.800l3.300 1.300v4.600l-3.300 2.100l-3.200-1.600z" fill="#4178bd" stroke="#1c457e" stroke-width=".6"/><path d="M29.800 234.300l3.200 1.300l3.300-1.800M33 235.600v4.800" fill="none" stroke="#1c457e" stroke-width=".5"/><path d="M29.800 234.300l3.200-1.800l3.300 1.300l-3.300 1.800z" fill="#7fadE4"/>
<path d="M46.400 248.400q0-2 2-2h4q1 0 1.600 0.700l0.600 0.700h5.400q1.800 0 1.800 1.800v3h-15.400z" fill="#6a4fc0"/><path d="M46.400 251.400q0-1.700 1.700-1.700h3.500q0.900 0 1.500-0.600l0.500-0.400h6.400q1.700 0 1.700 1.700v8.300q0 1.700-1.700 1.700h-11.900q-1.700 0-1.700-1.700z" fill="#7a7a7a" stroke="#4a4266" stroke-width=".8"/>
<circle cx="76" cy="270.400" r="4.500" fill="#5b8dd0" stroke="#3d6cae" stroke-width=".6"/><circle cx="70.600" cy="275.300" r="4.500" fill="#4a7ec4" stroke="#3d6cae" stroke-width=".6"/><path d="M72.500 269.500l5.800 6" stroke="#7aa6dc" stroke-width=".7" opacity=".6"/>
<circle cx="96.300" cy="290" r="4.500" fill="#8fb0c8"/><circle cx="91.300" cy="294.600" r="4.500" fill="#88a9c2"/><path d="M92.500 289l5.600 5.800" stroke="#a9c4d6" stroke-width=".7" opacity=".7"/>
<path d="M88.500 304.500h2.200v1.500h6.600v-1.500h2.200v7.500l-3.500 2v3.500h-4v-3.500l-3.500-2z" fill="#9dbdd3" stroke="#7ea3bd" stroke-width=".7"/><rect x="90.800" y="306.500" width="6.400" height="5" fill="#86a8c0"/>
<path d="M456.4 1143h8.200v2.800h-5v3h3.600v2.700h-3.600v5.800h-3.200z" fill="#d41c24" stroke="#9a0c12" stroke-width=".5"/>
<polygon points="471.0,1152.2 469.5,1153.5 469.6,1155.5 467.6,1155.4 466.3,1156.9 465.0,1155.4 463.0,1155.5 463.1,1153.5 461.6,1152.2 463.1,1150.9 463.0,1148.9 465.0,1149.0 466.3,1147.5 467.6,1149.0 469.6,1148.9 469.5,1150.9" fill="#3f6fb4" stroke="#2b5390" stroke-width=".5"/><circle cx="466.3" cy="1152.2" r="1.600" fill="#f0f0f0"/>
<path d="M595.3 1143.5h8.200v2.800h-5v3h3.600v2.700h-3.600v5.800h-3.200z" fill="#d41c24" stroke="#9a0c12" stroke-width=".5"/>
<polygon points="609.9,1152.7 608.4,1154.0 608.5,1156.0 606.5,1155.9 605.2,1157.4 603.9,1155.9 601.9,1156.0 602.0,1154.0 600.5,1152.7 602.0,1151.4 601.9,1149.4 603.9,1149.5 605.2,1148.0 606.5,1149.5 608.5,1149.4 608.4,1151.4" fill="#3f6fb4" stroke="#2b5390" stroke-width=".5"/><circle cx="605.2" cy="1152.7" r="1.600" fill="#f0f0f0"/>
<circle cx="560" cy="1151" r="7.900" fill="#d0162e"/><path d="M557.3 1148.3l5.400 5.400M562.7 1148.3l-5.400 5.400" stroke="#fff" stroke-width="1.700" stroke-linecap="round"/>
<circle cx="826" cy="1151.5" r="7.900" fill="#d0162e"/><path d="M823.3 1148.8l5.400 5.400M828.7 1148.8l-5.400 5.400" stroke="#fff" stroke-width="1.700" stroke-linecap="round"/>
<rect x="1422.400" y="1394" width="8.600" height="12" rx="3.800" fill="none" stroke="#2a2a2a" stroke-width="1.500"/><path d="M1426.700 1395.500v3.600" stroke="#2a2a2a" stroke-width="1.300"/>
<path d="M1491.800 1398.700h5.400l-2.700 2.800z" fill="#555"/>
<rect x="1694" y="1410" width="1.500" height="1.500" fill="#b4b4b4"/>
<rect x="1691" y="1410" width="1.500" height="1.500" fill="#b4b4b4"/>
<rect x="1688" y="1410" width="1.500" height="1.500" fill="#b4b4b4"/>
<rect x="1694" y="1407" width="1.500" height="1.500" fill="#b4b4b4"/>
<rect x="1691" y="1407" width="1.500" height="1.500" fill="#b4b4b4"/>
<rect x="1694" y="1404" width="1.500" height="1.500" fill="#b4b4b4"/></svg>
</div>
</body></html>
